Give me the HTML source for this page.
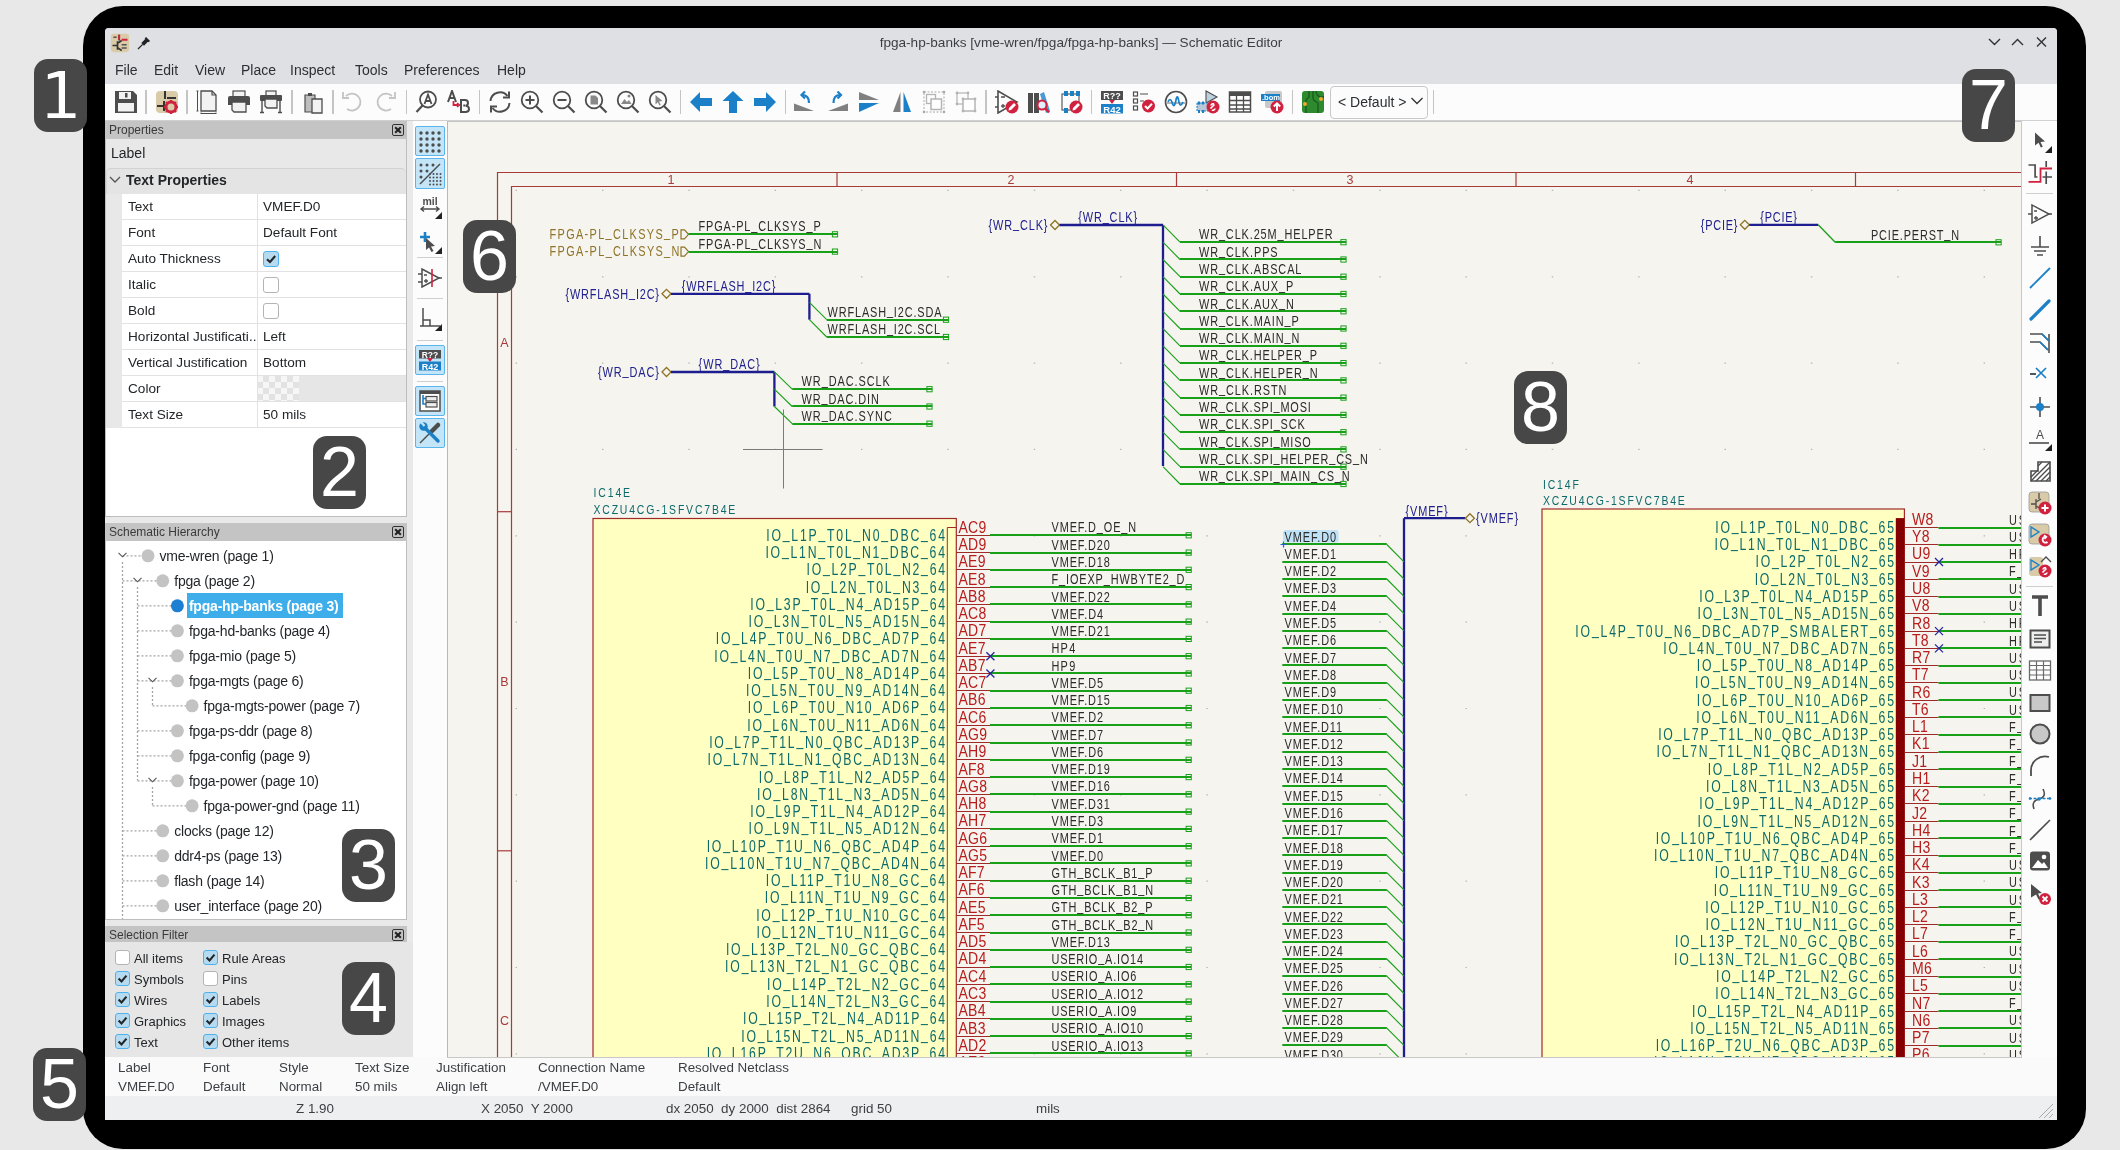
<!DOCTYPE html><html><head><meta charset="utf-8"><title>KiCad Schematic Editor</title><style>
*{box-sizing:border-box;margin:0;padding:0}
html,body{width:2120px;height:1150px;overflow:hidden;background:#e8e8e8;font-family:"Liberation Sans",sans-serif;color:#232629}
.a{position:absolute}
.t{position:absolute;white-space:nowrap;font-size:13.6px;line-height:16px;color:#232629}
.badge{position:absolute;width:53px;height:73px;background:#474747;border-radius:14px;color:#fff;font-size:70px;line-height:73px;text-align:center}
.hdr{position:absolute;left:105px;width:302px;height:18px;background:#c4c4c4}
.hdr span{position:absolute;left:4px;top:1px;font-size:12px;line-height:16px;color:#3a3a3a}
.xb{position:absolute;left:287px;top:3px;width:11.5px;height:11.5px;border:1.3px solid #333;border-radius:2px}
.xb:before,.xb:after{content:"";position:absolute;left:0.5px;top:3.6px;width:8px;height:2px;background:#222;transform:rotate(45deg)}
.xb:after{transform:rotate(-45deg)}
.cb{position:absolute;width:16px;height:16px;border:1px solid #b4b4b4;border-radius:3px;background:#fff}
.cb.on{background:#b6dbf1;border:1.6px solid #4fb1ea}
.tb{position:absolute;width:30px;height:30px;border:1px solid #5ab4ea;border-radius:2px;background:#c6e5f7}
</style></head><body>
<div id="root" style="position:absolute;left:0;top:0;width:2120px;height:1150px;will-change:transform">
<div class="a" style="left:83px;top:6px;width:2003px;height:1143px;background:#000;border-radius:40px"></div>
<div class="a" style="left:105px;top:28px;width:1952px;height:1092px;background:#e9e9e9;border-radius:4px 4px 0 0"></div>
<div class="a" style="left:105px;top:28px;width:1952px;height:56px;background:#dfe0e3;border-radius:4px 4px 0 0"></div>
<div class="t" style="left:0;width:2162px;text-align:center;top:35px;color:#3b3f43">fpga-hp-banks [vme-wren/fpga/fpga-hp-banks] — Schematic Editor</div>
<div class="t" style="left:115px;top:62px;font-size:14px;color:#2b2f33">File</div>
<div class="t" style="left:154px;top:62px;font-size:14px;color:#2b2f33">Edit</div>
<div class="t" style="left:195px;top:62px;font-size:14px;color:#2b2f33">View</div>
<div class="t" style="left:241px;top:62px;font-size:14px;color:#2b2f33">Place</div>
<div class="t" style="left:290px;top:62px;font-size:14px;color:#2b2f33">Inspect</div>
<div class="t" style="left:355px;top:62px;font-size:14px;color:#2b2f33">Tools</div>
<div class="t" style="left:404px;top:62px;font-size:14px;color:#2b2f33">Preferences</div>
<div class="t" style="left:497px;top:62px;font-size:14px;color:#2b2f33">Help</div>
<div class="a" style="left:105px;top:84px;width:1952px;height:37px;background:#fcfcfc;border-bottom:1px solid #d0d0d0"></div>
<svg class="a" style="left:110.0px;top:33.0px" width="20" height="20" viewBox="0 0 24 24"><rect x="1" y="1" width="22" height="22" rx="4" fill="#d9cba8"/><path d="M11 2 V9 M3 15 H9 M9 10 V20 M9 12.5 L14 9 M9 17.5 L14 21" stroke="#333" stroke-width="2" fill="none"/><path d="M11 2 V8 M14 8 H21" stroke="#d0223f" stroke-width="2.4"/><path d="M14 14 H20 M14 18 H20 M4 5 H8" stroke="#555" stroke-width="1.8"/></svg>
<svg class="a" style="left:136.0px;top:35.0px" width="16" height="16" viewBox="0 0 24 24"><path d="M3 21 L10 14" stroke="#222" stroke-width="1.8"/><path d="M8 12 L12 16 L19 9 L15 5 Z" fill="#222"/><path d="M14 4 L20 10" stroke="#222" stroke-width="3"/></svg>
<svg class="a" style="left:1985px;top:34px" width="70" height="18"><path d="M4 5 L9.5 10.5 L15 5 M27 11 L32.5 5.5 L38 11 M52 3.5 L61 12.5 M61 3.5 L52 12.5" stroke="#333" stroke-width="1.4" fill="none"/></svg>
<svg class="a" style="left:113.7px;top:89.7px" width="24" height="24" viewBox="0 0 24 24"><path d="M1 1 H19 L23 5 V23 H1 Z" fill="#4d4d4d"/><rect x="4" y="13" width="16" height="8.5" fill="#f2f2f2"/><rect x="5" y="2" width="12" height="7" fill="#f2f2f2"/><rect x="11" y="3" width="2.5" height="4.5" fill="#4d4d4d"/></svg>
<div class="a" style="left:145.2px;top:90px;width:1.5px;height:24px;background:#c4c4c4"></div>
<svg class="a" style="left:155.0px;top:89.7px" width="24" height="24" viewBox="0 0 24 24"><rect x="1" y="1" width="22" height="22" rx="4" fill="#d9cba8"/><path d="M10 1 V9 M2 16 H9 M9 11 V21 M12 8 H21" stroke="#333" stroke-width="2"/><circle cx="16" cy="17" r="5" fill="none" stroke="#d0223f" stroke-width="3"/><path d="M16 10 V12 M16 22 V24 M9 17 H11 M21 17 H23 M11 12 L12.5 13.5 M21 12 L19.5 13.5 M11 22 L12.5 20.5 M21 22 L19.5 20.5" stroke="#d0223f" stroke-width="2.2"/></svg>
<div class="a" style="left:186.2px;top:90px;width:1.5px;height:24px;background:#c4c4c4"></div>
<svg class="a" style="left:194.5px;top:89.7px" width="24" height="24" viewBox="0 0 24 24"><path d="M6 1 H17 L21 5 V21 H6 Z" fill="#f2f2f2" stroke="#4d4d4d" stroke-width="1.3"/><path d="M17 1 V5 H21" fill="none" stroke="#4d4d4d" stroke-width="1.2"/><path d="M2.5 1 V21 M1.5 1 H3.5 M1.5 21 H3.5 M6 23.5 H21 M6 22.5 V24 M21 22.5 V24" stroke="#4d4d4d" stroke-width="1"/></svg>
<svg class="a" style="left:227.0px;top:89.7px" width="24" height="24" viewBox="0 0 24 24"><rect x="6" y="1" width="12" height="6" fill="#f2f2f2" stroke="#4d4d4d" stroke-width="1.2"/><path d="M1 8 Q1 6 3 6 H21 Q23 6 23 8 V15 H1 Z" fill="#4d4d4d"/><path d="M5 12 H19 V22 H7 L5 20 Z" fill="#f2f2f2" stroke="#4d4d4d" stroke-width="1.3"/></svg>
<svg class="a" style="left:259.0px;top:89.7px" width="24" height="24" viewBox="0 0 24 24"><rect x="7" y="1" width="10" height="5" fill="#f2f2f2" stroke="#4d4d4d" stroke-width="1.2"/><rect x="1" y="5" width="22" height="6" rx="1" fill="#4d4d4d"/><path d="M6 9 H18 V18 H8 L6 16 Z" fill="#f2f2f2" stroke="#4d4d4d" stroke-width="1.3"/><path d="M3 11 V22 M21 11 V22 M1 22.5 H5 M19 22.5 H23" stroke="#4d4d4d" stroke-width="1.4"/></svg>
<div class="a" style="left:291.2px;top:90px;width:1.5px;height:24px;background:#c4c4c4"></div>
<svg class="a" style="left:302.0px;top:89.7px" width="24" height="24" viewBox="0 0 24 24"><path d="M3 5 H13 V22 H3 Z" fill="#bdbdbd" stroke="#4d4d4d" stroke-width="1.2"/><path d="M6 3 H10 V6 H6 Z" fill="#4d4d4d"/><path d="M10 9 H20 V23 H10 Z" fill="#f2f2f2" stroke="#4d4d4d" stroke-width="1.3"/></svg>
<div class="a" style="left:332.2px;top:90px;width:1.5px;height:24px;background:#c4c4c4"></div>
<svg class="a" style="left:341.0px;top:89.7px" width="24" height="24" viewBox="0 0 24 24"><path d="M5 6 A8.5 8.5 0 1 1 6 19" fill="none" stroke="#c4c4c4" stroke-width="1.8"/><path d="M2 2 V8 H8" fill="none" stroke="#c4c4c4" stroke-width="1.8"/></svg>
<svg class="a" style="left:373.0px;top:89.7px" width="24" height="24" viewBox="0 0 24 24"><path d="M19 6 A8.5 8.5 0 1 0 18 19" fill="none" stroke="#c4c4c4" stroke-width="1.8"/><path d="M22 2 V8 H16" fill="none" stroke="#c4c4c4" stroke-width="1.8"/></svg>
<div class="a" style="left:405.6px;top:90px;width:1.5px;height:24px;background:#c4c4c4"></div>
<svg class="a" style="left:415.0px;top:89.7px" width="24" height="24" viewBox="0 0 24 24"><circle cx="13" cy="9.5" r="8" fill="none" stroke="#4d4d4d" stroke-width="1.8"/><path d="M7.5 15.5 L1.5 22" stroke="#4d4d4d" stroke-width="2.2"/><path d="M9.5 14 L13 4.5 L16.5 14 M10.5 11 H15.5" stroke="#4d4d4d" stroke-width="1.8" fill="none"/></svg>
<svg class="a" style="left:447.0px;top:89.7px" width="24" height="24" viewBox="0 0 24 24"><path d="M1 12 L5 1 L9 12 M2.5 8 H7.5" stroke="#4d4d4d" stroke-width="2" fill="none"/><path d="M6.5 11 V15 H11" stroke="#d0223f" stroke-width="1.8" fill="none"/><path d="M10 13 L12.5 15 L10 17" stroke="#d0223f" stroke-width="1.6" fill="none"/><path d="M14 22 V10 H18 Q21 10 21 13 Q21 15.5 18.5 15.8 Q22 16 22 19 Q22 22 18.5 22 Z M16.3 15.5 H18" stroke="#4d4d4d" stroke-width="2" fill="none"/></svg>
<div class="a" style="left:478.6px;top:90px;width:1.5px;height:24px;background:#c4c4c4"></div>
<svg class="a" style="left:487.7px;top:89.7px" width="24" height="24" viewBox="0 0 24 24"><path d="M2.5 11 A9.5 9.5 0 0 1 19.5 6" fill="none" stroke="#4d4d4d" stroke-width="2"/><path d="M21.5 13 A9.5 9.5 0 0 1 4.5 18" fill="none" stroke="#4d4d4d" stroke-width="2"/><path d="M21 1.5 V7.5 H15" fill="none" stroke="#4d4d4d" stroke-width="2"/><path d="M3 22.5 V16.5 H9" fill="none" stroke="#4d4d4d" stroke-width="2"/></svg>
<svg class="a" style="left:519.6px;top:89.7px" width="24" height="24" viewBox="0 0 24 24"><circle cx="10" cy="10" r="8.3" fill="none" stroke="#4d4d4d" stroke-width="1.8"/><path d="M16 16 L22.5 22.5" stroke="#4d4d4d" stroke-width="2.2"/><path d="M10 5.5 V14.5 M5.5 10 H14.5" stroke="#4d4d4d" stroke-width="2"/></svg>
<svg class="a" style="left:552.0px;top:89.7px" width="24" height="24" viewBox="0 0 24 24"><circle cx="10" cy="10" r="8.3" fill="none" stroke="#4d4d4d" stroke-width="1.8"/><path d="M16 16 L22.5 22.5" stroke="#4d4d4d" stroke-width="2.2"/><path d="M5.5 10 H14.5" stroke="#4d4d4d" stroke-width="2"/></svg>
<svg class="a" style="left:584.0px;top:89.7px" width="24" height="24" viewBox="0 0 24 24"><circle cx="10" cy="10" r="8.3" fill="none" stroke="#4d4d4d" stroke-width="1.8"/><path d="M16 16 L22.5 22.5" stroke="#4d4d4d" stroke-width="2.2"/><path d="M6.5 5.5 H11.5 L14 8 V14.5 H6.5 Z" fill="#888"/></svg>
<svg class="a" style="left:616.0px;top:89.7px" width="24" height="24" viewBox="0 0 24 24"><circle cx="10" cy="10" r="8.3" fill="none" stroke="#4d4d4d" stroke-width="1.8"/><path d="M16 16 L22.5 22.5" stroke="#4d4d4d" stroke-width="2.2"/><path d="M5 14 L8.5 9 L11 12 L13 10 L15.5 14 Z" fill="#888"/><circle cx="13" cy="6" r="1.5" fill="#888"/></svg>
<svg class="a" style="left:648.0px;top:89.7px" width="24" height="24" viewBox="0 0 24 24"><circle cx="10" cy="10" r="8.3" fill="none" stroke="#4d4d4d" stroke-width="1.8"/><path d="M16 16 L22.5 22.5" stroke="#4d4d4d" stroke-width="2.2"/><path d="M7.5 5 L14.5 11 L11 11.5 L12.8 15 L11.5 15.6 L9.8 12.2 L7.5 14.5 Z" fill="#888"/></svg>
<div class="a" style="left:679.5px;top:90px;width:1.5px;height:24px;background:#c4c4c4"></div>
<svg class="a" style="left:689.0px;top:89.7px" width="24" height="24" viewBox="0 0 24 24"><path d="M1 12 L11 2 V8 H23 V16 H11 V22 Z" fill="#1b80c8"/></svg>
<svg class="a" style="left:720.5px;top:89.7px" width="24" height="24" viewBox="0 0 24 24"><path d="M12 1 L22.5 11 H16 V23 H8 V11 H1.5 Z" fill="#1b80c8"/></svg>
<svg class="a" style="left:752.6px;top:89.7px" width="24" height="24" viewBox="0 0 24 24"><path d="M23 12 L13 2 V8 H1 V16 H13 V22 Z" fill="#1b80c8"/></svg>
<div class="a" style="left:784.5px;top:90px;width:1.5px;height:24px;background:#c4c4c4"></div>
<svg class="a" style="left:793.4px;top:89.7px" width="24" height="24" viewBox="0 0 24 24"><path d="M1 21 L1 13.5 L21 21 Z" fill="#808080"/><path d="M16 13 Q16 5 9 5" fill="none" stroke="#1b80c8" stroke-width="2.2"/><path d="M12 1.5 L8.5 5 L12 8.5" fill="none" stroke="#1b80c8" stroke-width="2.2"/></svg>
<svg class="a" style="left:826.0px;top:89.7px" width="24" height="24" viewBox="0 0 24 24"><path d="M2 21 L22 13.5 L22 21 Z" fill="#808080"/><path d="M7.5 13 Q7.5 5 14 5" fill="none" stroke="#1b80c8" stroke-width="2.2"/><path d="M11.5 1.5 L15 5 L11.5 8.5" fill="none" stroke="#1b80c8" stroke-width="2.2"/></svg>
<svg class="a" style="left:857.0px;top:89.7px" width="24" height="24" viewBox="0 0 24 24"><path d="M2 2 L22 10 H2 Z" fill="#808080"/><path d="M2 13 H22 L2 22 Z" fill="#1b80c8"/></svg>
<svg class="a" style="left:889.7px;top:89.7px" width="24" height="24" viewBox="0 0 24 24"><path d="M10.5 2 V22 H3 Z" fill="#808080"/><path d="M13.5 2 L21 22 H13.5 Z" fill="#1b80c8"/></svg>
<svg class="a" style="left:921.5px;top:89.7px" width="24" height="24" viewBox="0 0 24 24"><rect x="2" y="2" width="20" height="20" fill="none" stroke="#aaa" stroke-width="1" stroke-dasharray="2 1.5"/><rect x="4.5" y="4.5" width="9" height="9" fill="none" stroke="#b4b4b4" stroke-width="1.3"/><rect x="9" y="9" width="10.5" height="10.5" fill="#fff" stroke="#b4b4b4" stroke-width="1.5"/><circle cx="2" cy="2" r="1.3" fill="#aaa"/><circle cx="22" cy="2" r="1.3" fill="#aaa"/><circle cx="2" cy="22" r="1.3" fill="#aaa"/><circle cx="22" cy="22" r="1.3" fill="#aaa"/></svg>
<svg class="a" style="left:953.5px;top:89.7px" width="24" height="24" viewBox="0 0 24 24"><rect x="3" y="3" width="11" height="11" fill="none" stroke="#b4b4b4" stroke-width="1.2"/><rect x="9" y="9" width="12" height="12" fill="#fff" stroke="#b4b4b4" stroke-width="1.5"/><g fill="#b4b4b4"><circle cx="3" cy="3" r="1.4"/><circle cx="14" cy="3" r="1.4"/><circle cx="3" cy="14" r="1.4"/><circle cx="9" cy="9" r="1.4"/><circle cx="21" cy="9" r="1.4"/><circle cx="9" cy="21" r="1.4"/><circle cx="21" cy="21" r="1.4"/></g></svg>
<div class="a" style="left:985.4px;top:90px;width:1.5px;height:24px;background:#c4c4c4"></div>
<svg class="a" style="left:994.6px;top:89.7px" width="24" height="24" viewBox="0 0 24 24"><path d="M3 1 V23 L22 12 Z" fill="none" stroke="#4d4d4d" stroke-width="1.6"/><path d="M0 7 H3 M0 17 H3 M6 7 H10 M6 16 H10 M8 14 V18" stroke="#4d4d4d" stroke-width="1.3"/><circle cx="17" cy="17" r="6.5" fill="#d0223f"/><path d="M13.5 20.5 L14 18 L19 13 L21 15 L16 20 Z" fill="#fff"/></svg>
<svg class="a" style="left:1027.0px;top:89.7px" width="24" height="24" viewBox="0 0 24 24"><rect x="1" y="3" width="5" height="20" fill="#4d4d4d"/><rect x="7" y="3" width="5" height="20" fill="#4d4d4d"/><path d="M13 4 L17 2 L23 21 L19 23 Z" fill="#1b80c8" opacity="0.8"/><circle cx="15" cy="15" r="4.5" fill="#dff0fb" stroke="#d0223f" stroke-width="2"/><path d="M18 18 L22 22.5" stroke="#d0223f" stroke-width="2.5"/></svg>
<svg class="a" style="left:1058.9px;top:89.7px" width="24" height="24" viewBox="0 0 24 24"><rect x="3" y="4" width="17" height="16" fill="none" stroke="#4d4d4d" stroke-width="1.1"/><g fill="#1b80c8"><rect x="5" y="1" width="4" height="5"/><rect x="11" y="1" width="4" height="5"/><rect x="17" y="1" width="4" height="5"/><rect x="5" y="18" width="4" height="5"/></g><circle cx="17" cy="17" r="6.5" fill="#d0223f"/><path d="M13.5 20.5 L14 18 L19 13 L21 15 L16 20 Z" fill="#fff"/></svg>
<div class="a" style="left:1090.5px;top:90px;width:1.5px;height:24px;background:#c4c4c4"></div>
<svg class="a" style="left:1099.7px;top:89.7px" width="24" height="24" viewBox="0 0 24 24"><rect x="1" y="1" width="22" height="9" fill="#4d4d4d"/><text x="12" y="9" font-size="9" font-weight="bold" fill="#fff" text-anchor="middle" font-family="Liberation Sans">R??</text><path d="M9 10 H15 L12 14 Z" fill="#d0223f"/><rect x="1" y="14" width="22" height="9.5" fill="#1b80c8"/><text x="12" y="22.5" font-size="9.5" font-weight="bold" fill="#fff" text-anchor="middle" font-family="Liberation Sans">R42</text></svg>
<svg class="a" style="left:1132.4px;top:89.7px" width="24" height="24" viewBox="0 0 24 24"><g fill="none" stroke="#4d4d4d" stroke-width="1.2"><rect x="1.5" y="2" width="4" height="4"/><rect x="1.5" y="9" width="4" height="4"/><rect x="1.5" y="16" width="4" height="4"/></g><path d="M8 4 H16 M8 11 H12" stroke="#4d4d4d" stroke-width="1.2"/><circle cx="16.5" cy="16" r="6.5" fill="#d0223f"/><path d="M13 16 L15.5 18.5 L20 13.8" stroke="#fff" stroke-width="2" fill="none"/></svg>
<svg class="a" style="left:1163.7px;top:89.7px" width="24" height="24" viewBox="0 0 24 24"><circle cx="12" cy="12" r="10.5" fill="none" stroke="#4d4d4d" stroke-width="1.6"/><path d="M3 13 H21" stroke="#4d4d4d" stroke-width="0.8"/><path d="M4 12 Q6 7 8 12 Q10 20 12 10 Q13.5 3 15 12 Q16.5 18 19 12" fill="none" stroke="#1b80c8" stroke-width="1.7"/></svg>
<svg class="a" style="left:1195.6px;top:89.7px" width="24" height="24" viewBox="0 0 24 24"><path d="M10 1 V13 L21 7 Z" fill="#bcd0e0" stroke="#4d4d4d" stroke-width="1.1"/><rect x="1" y="13" width="11" height="8" fill="#b8c8d8" stroke="#1b80c8" stroke-width="1" stroke-dasharray="2 1"/><g fill="#1b80c8"><rect x="2" y="11.5" width="2" height="3"/><rect x="6" y="11.5" width="2" height="3"/><rect x="2" y="20" width="2" height="3"/><rect x="6" y="20" width="2" height="3"/></g><circle cx="17" cy="17" r="6.5" fill="#d0223f"/><path d="M14.5 18.5 L18.5 14.5 M15 15.5 A2 2 0 0 1 18 14 M19 18.5 A2 2 0 0 1 16 20" stroke="#fff" stroke-width="1.6" fill="none"/></svg>
<svg class="a" style="left:1227.7px;top:89.7px" width="24" height="24" viewBox="0 0 24 24"><rect x="1.5" y="2" width="21" height="20" fill="#fff" stroke="#4d4d4d" stroke-width="1.5"/><rect x="1.5" y="2" width="21" height="4" fill="#4d4d4d"/><path d="M1.5 10.5 H22.5 M1.5 15 H22.5 M1.5 19 H22.5 M8.5 6 V22 M15.5 6 V22" stroke="#4d4d4d" stroke-width="1.3"/></svg>
<svg class="a" style="left:1259.6px;top:89.7px" width="24" height="24" viewBox="0 0 24 24"><rect x="5" y="1" width="17" height="17" rx="2" fill="#c8c8c8"/><rect x="1" y="4" width="19" height="7" fill="#1b80c8"/><text x="11" y="10" font-size="7.5" fill="#fff" text-anchor="middle" font-family="Liberation Sans" font-weight="bold">.bom</text><circle cx="17" cy="17" r="6.5" fill="#d0223f"/><path d="M17 21 V13.5 M13.8 16.5 L17 13.3 L20.2 16.5" stroke="#fff" stroke-width="2" fill="none"/></svg>
<div class="a" style="left:1291.7px;top:90px;width:1.5px;height:24px;background:#c4c4c4"></div>
<svg class="a" style="left:1300.8px;top:89.7px" width="24" height="24" viewBox="0 0 24 24"><rect x="1" y="1" width="22" height="22" rx="3" fill="#2e8a2e"/><path d="M8 1 V7 L5 10 V23 M12 1 V8 Q12 10 14 11 L17 13 V23 M15 1 Q15 5 19 7 H23" fill="none" stroke="#1a5e1a" stroke-width="1.4"/><circle cx="4" cy="14" r="2" fill="#f0a830"/><circle cx="20" cy="9" r="2" fill="#f0a830"/></svg>
<div class="a" style="left:1330px;top:86px;width:97.5px;height:32.5px;border:1px solid #c8c8c8;border-radius:4px;background:#fcfcfc"></div>
<div class="t" style="left:1338px;top:94px;font-size:14px;color:#2b2f33">&lt; Default &gt;</div>
<svg class="a" style="left:1410px;top:96px" width="14" height="10"><path d="M1.5 2 L7 7.5 L12.5 2" stroke="#333" stroke-width="1.3" fill="none"/></svg>
<div class="a" style="left:1432.5px;top:90px;width:1.5px;height:24px;background:#c4c4c4"></div>
<div class="hdr" style="top:121px"><span>Properties</span><div class="xb"></div></div>
<div class="a" style="left:105px;top:139px;width:302px;height:378px;background:#e8e8e8;border:1px solid #bdbdbd;border-top:none"></div>
<div class="t" style="left:111px;top:145px;font-size:14px">Label</div>
<div class="a" style="left:106px;top:168px;width:300px;height:26px;background:#e4e4e4;border-radius:5px 5px 0 0;border-top:1px solid #d2d2d2;border-left:1px solid #d8d8d8"></div>
<svg class="a" style="left:109px;top:175px" width="12" height="10"><path d="M1 2 L6 7 L11 2" stroke="#555" stroke-width="1.3" fill="none"/></svg>
<div class="t" style="left:126px;top:172px;font-size:14px;font-weight:bold">Text Properties</div>
<div class="a" style="left:106px;top:194px;width:300px;height:322px;background:#fff"></div>
<div class="a" style="left:106px;top:194px;width:16px;height:234px;background:#e8e8e8"></div>
<div class="a" style="left:122px;top:219px;width:284px;height:1px;background:#e2e2e2"></div>
<div class="t" style="left:128px;top:199px">Text</div>
<div class="t" style="left:263px;top:199px">VMEF.D0</div>
<div class="a" style="left:122px;top:245px;width:284px;height:1px;background:#e2e2e2"></div>
<div class="t" style="left:128px;top:225px">Font</div>
<div class="t" style="left:263px;top:225px">Default Font</div>
<div class="a" style="left:122px;top:271px;width:284px;height:1px;background:#e2e2e2"></div>
<div class="t" style="left:128px;top:251px">Auto Thickness</div>
<div class="cb on" style="left:263px;top:251px"></div>
<svg class="a" style="left:263px;top:251px" width="16" height="16"><path d="M4 8.2 L7 11 L12.2 5" stroke="#232629" stroke-width="2.1" fill="none"/></svg>
<div class="a" style="left:122px;top:297px;width:284px;height:1px;background:#e2e2e2"></div>
<div class="t" style="left:128px;top:277px">Italic</div>
<div class="cb" style="left:263px;top:277px"></div>
<div class="a" style="left:122px;top:323px;width:284px;height:1px;background:#e2e2e2"></div>
<div class="t" style="left:128px;top:303px">Bold</div>
<div class="cb" style="left:263px;top:303px"></div>
<div class="a" style="left:122px;top:349px;width:284px;height:1px;background:#e2e2e2"></div>
<div class="t" style="left:128px;top:329px">Horizontal Justificati..</div>
<div class="t" style="left:263px;top:329px">Left</div>
<div class="a" style="left:122px;top:375px;width:284px;height:1px;background:#e2e2e2"></div>
<div class="t" style="left:128px;top:355px">Vertical Justification</div>
<div class="t" style="left:263px;top:355px">Bottom</div>
<div class="a" style="left:122px;top:401px;width:284px;height:1px;background:#e2e2e2"></div>
<div class="t" style="left:128px;top:381px">Color</div>
<div class="a" style="left:257px;top:376px;width:149px;height:25px;background:#e6e6e6"></div>
<svg class="a" style="left:257px;top:376px" width="42" height="25"><rect width="42" height="25" fill="#e2e2e2"/><rect x="0" y="0" width="6" height="6" fill="#f6f6f6"/><rect x="0" y="12" width="6" height="6" fill="#f6f6f6"/><rect x="0" y="24" width="6" height="6" fill="#f6f6f6"/><rect x="6" y="6" width="6" height="6" fill="#f6f6f6"/><rect x="6" y="18" width="6" height="6" fill="#f6f6f6"/><rect x="12" y="0" width="6" height="6" fill="#f6f6f6"/><rect x="12" y="12" width="6" height="6" fill="#f6f6f6"/><rect x="12" y="24" width="6" height="6" fill="#f6f6f6"/><rect x="18" y="6" width="6" height="6" fill="#f6f6f6"/><rect x="18" y="18" width="6" height="6" fill="#f6f6f6"/><rect x="24" y="0" width="6" height="6" fill="#f6f6f6"/><rect x="24" y="12" width="6" height="6" fill="#f6f6f6"/><rect x="24" y="24" width="6" height="6" fill="#f6f6f6"/><rect x="30" y="6" width="6" height="6" fill="#f6f6f6"/><rect x="30" y="18" width="6" height="6" fill="#f6f6f6"/><rect x="36" y="0" width="6" height="6" fill="#f6f6f6"/><rect x="36" y="12" width="6" height="6" fill="#f6f6f6"/><rect x="36" y="24" width="6" height="6" fill="#f6f6f6"/></svg>
<div class="a" style="left:122px;top:427px;width:284px;height:1px;background:#e2e2e2"></div>
<div class="t" style="left:128px;top:407px">Text Size</div>
<div class="t" style="left:263px;top:407px">50 mils</div>
<div class="a" style="left:257px;top:194px;width:1px;height:234px;background:#e2e2e2"></div>
<div class="hdr" style="top:523px"><span>Schematic Hierarchy</span><div class="xb"></div></div>
<div class="a" style="left:105px;top:541px;width:302px;height:379px;background:#fff;border:1px solid #bdbdbd;border-top:none"></div>
<svg class="a" style="left:105px;top:541px" width="302" height="378"><line x1="17.5" y1="21" x2="17.5" y2="378" stroke="#a4a4a4" stroke-width="1.3" stroke-dasharray="2 2"/><line x1="32.5" y1="46" x2="32.5" y2="239.5" stroke="#a4a4a4" stroke-width="1.3" stroke-dasharray="2 2"/><line x1="47.5" y1="146" x2="47.5" y2="164.5" stroke="#a4a4a4" stroke-width="1.3" stroke-dasharray="2 2"/><line x1="47.5" y1="246" x2="47.5" y2="264.5" stroke="#a4a4a4" stroke-width="1.3" stroke-dasharray="2 2"/><line x1="17.5" y1="14.799999999999955" x2="37.0" y2="14.799999999999955" stroke="#a4a4a4" stroke-width="1.3" stroke-dasharray="2 2"/><path d="M13.5 11.799999999999955 L17.5 15.799999999999955 L21.5 11.799999999999955" stroke="#555" stroke-width="1.1" fill="none"/><circle cx="43.0" cy="14.799999999999955" r="6.5" fill="#c3c3c3"/><line x1="17.5" y1="39.799999999999955" x2="51.69999999999999" y2="39.799999999999955" stroke="#a4a4a4" stroke-width="1.3" stroke-dasharray="2 2"/><path d="M28.5 36.799999999999955 L32.5 40.799999999999955 L36.5 36.799999999999955" stroke="#555" stroke-width="1.1" fill="none"/><circle cx="57.69999999999999" cy="39.799999999999955" r="6.5" fill="#c3c3c3"/><line x1="32.5" y1="64.79999999999995" x2="66.4" y2="64.79999999999995" stroke="#a4a4a4" stroke-width="1.3" stroke-dasharray="2 2"/><circle cx="72.4" cy="64.79999999999995" r="6.5" fill="#1d7fd1"/><line x1="32.5" y1="89.79999999999995" x2="66.4" y2="89.79999999999995" stroke="#a4a4a4" stroke-width="1.3" stroke-dasharray="2 2"/><circle cx="72.4" cy="89.79999999999995" r="6.5" fill="#c3c3c3"/><line x1="32.5" y1="114.79999999999995" x2="66.4" y2="114.79999999999995" stroke="#a4a4a4" stroke-width="1.3" stroke-dasharray="2 2"/><circle cx="72.4" cy="114.79999999999995" r="6.5" fill="#c3c3c3"/><line x1="32.5" y1="139.79999999999995" x2="66.4" y2="139.79999999999995" stroke="#a4a4a4" stroke-width="1.3" stroke-dasharray="2 2"/><path d="M43.5 136.79999999999995 L47.5 140.79999999999995 L51.5 136.79999999999995" stroke="#555" stroke-width="1.1" fill="none"/><circle cx="72.4" cy="139.79999999999995" r="6.5" fill="#c3c3c3"/><line x1="47.5" y1="164.79999999999995" x2="81.1" y2="164.79999999999995" stroke="#a4a4a4" stroke-width="1.3" stroke-dasharray="2 2"/><circle cx="87.1" cy="164.79999999999995" r="6.5" fill="#c3c3c3"/><line x1="32.5" y1="189.79999999999995" x2="66.4" y2="189.79999999999995" stroke="#a4a4a4" stroke-width="1.3" stroke-dasharray="2 2"/><circle cx="72.4" cy="189.79999999999995" r="6.5" fill="#c3c3c3"/><line x1="32.5" y1="214.79999999999995" x2="66.4" y2="214.79999999999995" stroke="#a4a4a4" stroke-width="1.3" stroke-dasharray="2 2"/><circle cx="72.4" cy="214.79999999999995" r="6.5" fill="#c3c3c3"/><line x1="32.5" y1="239.79999999999995" x2="66.4" y2="239.79999999999995" stroke="#a4a4a4" stroke-width="1.3" stroke-dasharray="2 2"/><path d="M43.5 236.79999999999995 L47.5 240.79999999999995 L51.5 236.79999999999995" stroke="#555" stroke-width="1.1" fill="none"/><circle cx="72.4" cy="239.79999999999995" r="6.5" fill="#c3c3c3"/><line x1="47.5" y1="264.79999999999995" x2="81.1" y2="264.79999999999995" stroke="#a4a4a4" stroke-width="1.3" stroke-dasharray="2 2"/><circle cx="87.1" cy="264.79999999999995" r="6.5" fill="#c3c3c3"/><line x1="17.5" y1="289.79999999999995" x2="51.69999999999999" y2="289.79999999999995" stroke="#a4a4a4" stroke-width="1.3" stroke-dasharray="2 2"/><circle cx="57.69999999999999" cy="289.79999999999995" r="6.5" fill="#c3c3c3"/><line x1="17.5" y1="314.79999999999995" x2="51.69999999999999" y2="314.79999999999995" stroke="#a4a4a4" stroke-width="1.3" stroke-dasharray="2 2"/><circle cx="57.69999999999999" cy="314.79999999999995" r="6.5" fill="#c3c3c3"/><line x1="17.5" y1="339.79999999999995" x2="51.69999999999999" y2="339.79999999999995" stroke="#a4a4a4" stroke-width="1.3" stroke-dasharray="2 2"/><circle cx="57.69999999999999" cy="339.79999999999995" r="6.5" fill="#c3c3c3"/><line x1="17.5" y1="364.79999999999995" x2="51.69999999999999" y2="364.79999999999995" stroke="#a4a4a4" stroke-width="1.3" stroke-dasharray="2 2"/><circle cx="57.69999999999999" cy="364.79999999999995" r="6.5" fill="#c3c3c3"/></svg>
<div class="t" style="left:159.5px;top:547.8px;font-size:14px;letter-spacing:-0.2px">vme-wren (page 1)</div>
<div class="t" style="left:174.2px;top:572.8px;font-size:14px;letter-spacing:-0.2px">fpga (page 2)</div>
<div class="a" style="left:186.8px;top:593px;width:156px;height:25px;background:#3daee9"></div>
<div class="t" style="left:188.9px;top:597.8px;font-size:14px;font-weight:bold;color:#fff;letter-spacing:-0.2px">fpga-hp-banks (page 3)</div>
<div class="t" style="left:188.9px;top:622.8px;font-size:14px;letter-spacing:-0.2px">fpga-hd-banks (page 4)</div>
<div class="t" style="left:188.9px;top:647.8px;font-size:14px;letter-spacing:-0.2px">fpga-mio (page 5)</div>
<div class="t" style="left:188.9px;top:672.8px;font-size:14px;letter-spacing:-0.2px">fpga-mgts (page 6)</div>
<div class="t" style="left:203.6px;top:697.8px;font-size:14px;letter-spacing:-0.2px">fpga-mgts-power (page 7)</div>
<div class="t" style="left:188.9px;top:722.8px;font-size:14px;letter-spacing:-0.2px">fpga-ps-ddr (page 8)</div>
<div class="t" style="left:188.9px;top:747.8px;font-size:14px;letter-spacing:-0.2px">fpga-config (page 9)</div>
<div class="t" style="left:188.9px;top:772.8px;font-size:14px;letter-spacing:-0.2px">fpga-power (page 10)</div>
<div class="t" style="left:203.6px;top:797.8px;font-size:14px;letter-spacing:-0.2px">fpga-power-gnd (page 11)</div>
<div class="t" style="left:174.2px;top:822.8px;font-size:14px;letter-spacing:-0.2px">clocks (page 12)</div>
<div class="t" style="left:174.2px;top:847.8px;font-size:14px;letter-spacing:-0.2px">ddr4-ps (page 13)</div>
<div class="t" style="left:174.2px;top:872.8px;font-size:14px;letter-spacing:-0.2px">flash (page 14)</div>
<div class="t" style="left:174.2px;top:897.8px;font-size:14px;letter-spacing:-0.2px">user_interface (page 20)</div>
<div class="hdr" style="top:926px"><span>Selection Filter</span><div class="xb"></div></div>
<div class="a" style="left:105px;top:942px;width:308px;height:115px;background:#e6e6e6"></div>
<div class="cb" style="left:115px;top:950px;width:15px;height:15px"></div>
<div class="t" style="left:134px;top:950.5px;font-size:13px">All items</div>
<div class="cb on" style="left:203px;top:950px;width:15px;height:15px"></div>
<svg class="a" style="left:203px;top:950px" width="15" height="15"><path d="M3.6 7.6 L6.5 10.4 L11.5 4.6" stroke="#232629" stroke-width="2.1" fill="none"/></svg>
<div class="t" style="left:222px;top:950.5px;font-size:13px">Rule Areas</div>
<div class="cb on" style="left:115px;top:971px;width:15px;height:15px"></div>
<svg class="a" style="left:115px;top:971px" width="15" height="15"><path d="M3.6 7.6 L6.5 10.4 L11.5 4.6" stroke="#232629" stroke-width="2.1" fill="none"/></svg>
<div class="t" style="left:134px;top:971.5px;font-size:13px">Symbols</div>
<div class="cb" style="left:203px;top:971px;width:15px;height:15px"></div>
<div class="t" style="left:222px;top:971.5px;font-size:13px">Pins</div>
<div class="cb on" style="left:115px;top:992px;width:15px;height:15px"></div>
<svg class="a" style="left:115px;top:992px" width="15" height="15"><path d="M3.6 7.6 L6.5 10.4 L11.5 4.6" stroke="#232629" stroke-width="2.1" fill="none"/></svg>
<div class="t" style="left:134px;top:992.5px;font-size:13px">Wires</div>
<div class="cb on" style="left:203px;top:992px;width:15px;height:15px"></div>
<svg class="a" style="left:203px;top:992px" width="15" height="15"><path d="M3.6 7.6 L6.5 10.4 L11.5 4.6" stroke="#232629" stroke-width="2.1" fill="none"/></svg>
<div class="t" style="left:222px;top:992.5px;font-size:13px">Labels</div>
<div class="cb on" style="left:115px;top:1013px;width:15px;height:15px"></div>
<svg class="a" style="left:115px;top:1013px" width="15" height="15"><path d="M3.6 7.6 L6.5 10.4 L11.5 4.6" stroke="#232629" stroke-width="2.1" fill="none"/></svg>
<div class="t" style="left:134px;top:1013.5px;font-size:13px">Graphics</div>
<div class="cb on" style="left:203px;top:1013px;width:15px;height:15px"></div>
<svg class="a" style="left:203px;top:1013px" width="15" height="15"><path d="M3.6 7.6 L6.5 10.4 L11.5 4.6" stroke="#232629" stroke-width="2.1" fill="none"/></svg>
<div class="t" style="left:222px;top:1013.5px;font-size:13px">Images</div>
<div class="cb on" style="left:115px;top:1034px;width:15px;height:15px"></div>
<svg class="a" style="left:115px;top:1034px" width="15" height="15"><path d="M3.6 7.6 L6.5 10.4 L11.5 4.6" stroke="#232629" stroke-width="2.1" fill="none"/></svg>
<div class="t" style="left:134px;top:1034.5px;font-size:13px">Text</div>
<div class="cb on" style="left:203px;top:1034px;width:15px;height:15px"></div>
<svg class="a" style="left:203px;top:1034px" width="15" height="15"><path d="M3.6 7.6 L6.5 10.4 L11.5 4.6" stroke="#232629" stroke-width="2.1" fill="none"/></svg>
<div class="t" style="left:222px;top:1034.5px;font-size:13px">Other items</div>
<div class="a" style="left:413px;top:121px;width:34px;height:936px;background:#fcfcfc"></div>
<div class="a" style="left:2022px;top:121px;width:35px;height:936px;background:#fcfcfc"></div>
<svg class="a" style="left:447px;top:121px" width="1575" height="936" viewBox="447 121 1575 936" font-family="Liberation Sans, sans-serif"><rect x="447" y="121" width="1575" height="936" fill="#f5f4ef"/><line x1="447.5" y1="121" x2="447.5" y2="1057" stroke="#b8b8b8" stroke-width="1"/><line x1="447" y1="121.5" x2="2022" y2="121.5" stroke="#c4c4c4" stroke-width="1"/><path d="M515.6 190.4h1.4M515.6 276.8h1.4M515.6 363.1h1.4M515.6 449.4h1.4M515.6 535.8h1.4M515.6 622.1h1.4M515.6 708.5h1.4M515.6 794.8h1.4M515.6 881.2h1.4M515.6 967.5h1.4M515.6 1053.9h1.4M602.0 190.4h1.4M602.0 276.8h1.4M602.0 363.1h1.4M602.0 449.4h1.4M602.0 535.8h1.4M602.0 622.1h1.4M602.0 708.5h1.4M602.0 794.8h1.4M602.0 881.2h1.4M602.0 967.5h1.4M602.0 1053.9h1.4M688.4 190.4h1.4M688.4 276.8h1.4M688.4 363.1h1.4M688.4 449.4h1.4M688.4 535.8h1.4M688.4 622.1h1.4M688.4 708.5h1.4M688.4 794.8h1.4M688.4 881.2h1.4M688.4 967.5h1.4M688.4 1053.9h1.4M774.7 190.4h1.4M774.7 276.8h1.4M774.7 363.1h1.4M774.7 449.4h1.4M774.7 535.8h1.4M774.7 622.1h1.4M774.7 708.5h1.4M774.7 794.8h1.4M774.7 881.2h1.4M774.7 967.5h1.4M774.7 1053.9h1.4M861.0 190.4h1.4M861.0 276.8h1.4M861.0 363.1h1.4M861.0 449.4h1.4M861.0 535.8h1.4M861.0 622.1h1.4M861.0 708.5h1.4M861.0 794.8h1.4M861.0 881.2h1.4M861.0 967.5h1.4M861.0 1053.9h1.4M947.4 190.4h1.4M947.4 276.8h1.4M947.4 363.1h1.4M947.4 449.4h1.4M947.4 535.8h1.4M947.4 622.1h1.4M947.4 708.5h1.4M947.4 794.8h1.4M947.4 881.2h1.4M947.4 967.5h1.4M947.4 1053.9h1.4M1033.8 190.4h1.4M1033.8 276.8h1.4M1033.8 363.1h1.4M1033.8 449.4h1.4M1033.8 535.8h1.4M1033.8 622.1h1.4M1033.8 708.5h1.4M1033.8 794.8h1.4M1033.8 881.2h1.4M1033.8 967.5h1.4M1033.8 1053.9h1.4M1120.1 190.4h1.4M1120.1 276.8h1.4M1120.1 363.1h1.4M1120.1 449.4h1.4M1120.1 535.8h1.4M1120.1 622.1h1.4M1120.1 708.5h1.4M1120.1 794.8h1.4M1120.1 881.2h1.4M1120.1 967.5h1.4M1120.1 1053.9h1.4M1206.4 190.4h1.4M1206.4 276.8h1.4M1206.4 363.1h1.4M1206.4 449.4h1.4M1206.4 535.8h1.4M1206.4 622.1h1.4M1206.4 708.5h1.4M1206.4 794.8h1.4M1206.4 881.2h1.4M1206.4 967.5h1.4M1206.4 1053.9h1.4M1292.8 190.4h1.4M1292.8 276.8h1.4M1292.8 363.1h1.4M1292.8 449.4h1.4M1292.8 535.8h1.4M1292.8 622.1h1.4M1292.8 708.5h1.4M1292.8 794.8h1.4M1292.8 881.2h1.4M1292.8 967.5h1.4M1292.8 1053.9h1.4M1379.2 190.4h1.4M1379.2 276.8h1.4M1379.2 363.1h1.4M1379.2 449.4h1.4M1379.2 535.8h1.4M1379.2 622.1h1.4M1379.2 708.5h1.4M1379.2 794.8h1.4M1379.2 881.2h1.4M1379.2 967.5h1.4M1379.2 1053.9h1.4M1465.5 190.4h1.4M1465.5 276.8h1.4M1465.5 363.1h1.4M1465.5 449.4h1.4M1465.5 535.8h1.4M1465.5 622.1h1.4M1465.5 708.5h1.4M1465.5 794.8h1.4M1465.5 881.2h1.4M1465.5 967.5h1.4M1465.5 1053.9h1.4M1551.8 190.4h1.4M1551.8 276.8h1.4M1551.8 363.1h1.4M1551.8 449.4h1.4M1551.8 535.8h1.4M1551.8 622.1h1.4M1551.8 708.5h1.4M1551.8 794.8h1.4M1551.8 881.2h1.4M1551.8 967.5h1.4M1551.8 1053.9h1.4M1638.2 190.4h1.4M1638.2 276.8h1.4M1638.2 363.1h1.4M1638.2 449.4h1.4M1638.2 535.8h1.4M1638.2 622.1h1.4M1638.2 708.5h1.4M1638.2 794.8h1.4M1638.2 881.2h1.4M1638.2 967.5h1.4M1638.2 1053.9h1.4M1724.5 190.4h1.4M1724.5 276.8h1.4M1724.5 363.1h1.4M1724.5 449.4h1.4M1724.5 535.8h1.4M1724.5 622.1h1.4M1724.5 708.5h1.4M1724.5 794.8h1.4M1724.5 881.2h1.4M1724.5 967.5h1.4M1724.5 1053.9h1.4M1810.9 190.4h1.4M1810.9 276.8h1.4M1810.9 363.1h1.4M1810.9 449.4h1.4M1810.9 535.8h1.4M1810.9 622.1h1.4M1810.9 708.5h1.4M1810.9 794.8h1.4M1810.9 881.2h1.4M1810.9 967.5h1.4M1810.9 1053.9h1.4M1897.2 190.4h1.4M1897.2 276.8h1.4M1897.2 363.1h1.4M1897.2 449.4h1.4M1897.2 535.8h1.4M1897.2 622.1h1.4M1897.2 708.5h1.4M1897.2 794.8h1.4M1897.2 881.2h1.4M1897.2 967.5h1.4M1897.2 1053.9h1.4M1983.6 190.4h1.4M1983.6 276.8h1.4M1983.6 363.1h1.4M1983.6 449.4h1.4M1983.6 535.8h1.4M1983.6 622.1h1.4M1983.6 708.5h1.4M1983.6 794.8h1.4M1983.6 881.2h1.4M1983.6 967.5h1.4M1983.6 1053.9h1.4" stroke="#b4b4b4" stroke-width="1.2"/><path d="M2030 172.5 H497.5 V1060 M2030 186.5 H511.5 V1060" stroke="#a83a3a" stroke-width="1.2" fill="none"/><line x1="837" y1="172.5" x2="837" y2="186.5" stroke="#a83a3a" stroke-width="1.2"/><line x1="1176.5" y1="172.5" x2="1176.5" y2="186.5" stroke="#a83a3a" stroke-width="1.2"/><line x1="1516" y1="172.5" x2="1516" y2="186.5" stroke="#a83a3a" stroke-width="1.2"/><line x1="1855.5" y1="172.5" x2="1855.5" y2="186.5" stroke="#a83a3a" stroke-width="1.2"/><line x1="497.5" y1="511.7" x2="511.5" y2="511.7" stroke="#a83a3a" stroke-width="1.2"/><line x1="497.5" y1="850.8" x2="511.5" y2="850.8" stroke="#a83a3a" stroke-width="1.2"/><text x="671" y="183.8" font-size="12.5" fill="#a83a3a" text-anchor="middle">1</text><text x="1011" y="183.8" font-size="12.5" fill="#a83a3a" text-anchor="middle">2</text><text x="1350" y="183.8" font-size="12.5" fill="#a83a3a" text-anchor="middle">3</text><text x="1690" y="183.8" font-size="12.5" fill="#a83a3a" text-anchor="middle">4</text><text x="504.5" y="346.5" font-size="12.5" fill="#a83a3a" text-anchor="middle">A</text><text x="504.5" y="686.0" font-size="12.5" fill="#a83a3a" text-anchor="middle">B</text><text x="504.5" y="1025.0" font-size="12.5" fill="#a83a3a" text-anchor="middle">C</text><text transform="translate(549.6 239.1) scale(0.78 1)" font-size="14.0" fill="#8f7326" text-anchor="start" textLength="165.5" lengthAdjust="spacing">FPGA-PL<tspan dy="-1.68">_</tspan><tspan dy="1.68">CLKSYS</tspan><tspan dy="-1.68">_</tspan><tspan dy="1.68">P</tspan></text><path d="M681 229.8 H684.5 L688.5 234.3 L684.5 238.8 H681 Z" fill="none" stroke="#8f7326" stroke-width="1.2"/><line x1="688.5" y1="234.0" x2="837.5" y2="234.0" stroke="#18a018" stroke-width="2"/><rect x="832.4" y="231.7" width="5.2" height="5.2" fill="none" stroke="#18a018" stroke-width="1"/><text transform="translate(698.6 231.3) scale(0.78 1)" font-size="14.0" fill="#2b2b2b" text-anchor="start" textLength="156.5" lengthAdjust="spacing">FPGA-PL<tspan dy="-1.68">_</tspan><tspan dy="1.68">CLKSYS</tspan><tspan dy="-1.68">_</tspan><tspan dy="1.68">P</tspan></text><text transform="translate(549.6 256.4) scale(0.78 1)" font-size="14.0" fill="#8f7326" text-anchor="start" textLength="166.4" lengthAdjust="spacing">FPGA-PL<tspan dy="-1.68">_</tspan><tspan dy="1.68">CLKSYS</tspan><tspan dy="-1.68">_</tspan><tspan dy="1.68">N</tspan></text><path d="M681 247.1 H684.5 L688.5 251.6 L684.5 256.1 H681 Z" fill="none" stroke="#8f7326" stroke-width="1.2"/><line x1="688.5" y1="252.0" x2="837.5" y2="252.0" stroke="#18a018" stroke-width="2"/><rect x="832.4" y="249.0" width="5.2" height="5.2" fill="none" stroke="#18a018" stroke-width="1"/><text transform="translate(698.6 248.6) scale(0.78 1)" font-size="14.0" fill="#2b2b2b" text-anchor="start" textLength="157.3" lengthAdjust="spacing">FPGA-PL<tspan dy="-1.68">_</tspan><tspan dy="1.68">CLKSYS</tspan><tspan dy="-1.68">_</tspan><tspan dy="1.68">N</tspan></text><text transform="translate(659.0 298.7) scale(0.78 1)" font-size="14.0" fill="#20208e" text-anchor="end" textLength="120.0" lengthAdjust="spacing">{WRFLASH<tspan dy="-1.68">_</tspan><tspan dy="1.68">I2C}</tspan></text><path d="M662.0 293.8 L666.5 289.3 L671.0 293.8 L666.5 298.3 Z" fill="none" stroke="#8f7326" stroke-width="1.3"/><line x1="671.0" y1="293.8" x2="809.4" y2="293.8" stroke="#1d1d8f" stroke-width="2.3"/><line x1="809.4" y1="293.8" x2="809.4" y2="319.7" stroke="#1d1d8f" stroke-width="2.3"/><text transform="translate(681.7 291.2) scale(0.78 1)" font-size="14.0" fill="#20208e" text-anchor="start" textLength="120.0" lengthAdjust="spacing">{WRFLASH<tspan dy="-1.68">_</tspan><tspan dy="1.68">I2C}</tspan></text><line x1="809.4" y1="302.4" x2="826.7" y2="319.7" stroke="#18a018" stroke-width="1.1"/><line x1="826.7" y1="320.0" x2="948.5" y2="320.0" stroke="#18a018" stroke-width="2"/><rect x="943.4" y="317.1" width="5.2" height="5.2" fill="none" stroke="#18a018" stroke-width="1"/><text transform="translate(827.6 316.9) scale(0.78 1)" font-size="14.0" fill="#2b2b2b" text-anchor="start" textLength="146.0" lengthAdjust="spacing">WRFLASH<tspan dy="-1.68">_</tspan><tspan dy="1.68">I2C.SDA</tspan></text><line x1="809.4" y1="319.7" x2="826.7" y2="337.0" stroke="#18a018" stroke-width="1.1"/><line x1="826.7" y1="337.0" x2="948.5" y2="337.0" stroke="#18a018" stroke-width="2"/><rect x="943.4" y="334.4" width="5.2" height="5.2" fill="none" stroke="#18a018" stroke-width="1"/><text transform="translate(827.6 334.2) scale(0.78 1)" font-size="14.0" fill="#2b2b2b" text-anchor="start" textLength="144.3" lengthAdjust="spacing">WRFLASH<tspan dy="-1.68">_</tspan><tspan dy="1.68">I2C.SCL</tspan></text><text transform="translate(659.0 376.9) scale(0.78 1)" font-size="14.0" fill="#20208e" text-anchor="end" textLength="78.2" lengthAdjust="spacing">{WR<tspan dy="-1.68">_</tspan><tspan dy="1.68">DAC}</tspan></text><path d="M662.0 372.0 L666.5 367.5 L671.0 372.0 L666.5 376.5 Z" fill="none" stroke="#8f7326" stroke-width="1.3"/><line x1="671.0" y1="372.0" x2="774.4" y2="372.0" stroke="#1d1d8f" stroke-width="2.3"/><line x1="774.4" y1="372.0" x2="774.4" y2="406.5" stroke="#1d1d8f" stroke-width="2.3"/><text transform="translate(698.6 369.4) scale(0.78 1)" font-size="14.0" fill="#20208e" text-anchor="start" textLength="78.2" lengthAdjust="spacing">{WR<tspan dy="-1.68">_</tspan><tspan dy="1.68">DAC}</tspan></text><line x1="774.4" y1="371.9" x2="792.2" y2="389.2" stroke="#18a018" stroke-width="1.1"/><line x1="792.2" y1="389.0" x2="932.0" y2="389.0" stroke="#18a018" stroke-width="2"/><rect x="926.9" y="386.6" width="5.2" height="5.2" fill="none" stroke="#18a018" stroke-width="1"/><text transform="translate(801.6 386.4) scale(0.78 1)" font-size="14.0" fill="#2b2b2b" text-anchor="start" textLength="113.0" lengthAdjust="spacing">WR<tspan dy="-1.68">_</tspan><tspan dy="1.68">DAC.SCLK</tspan></text><line x1="774.4" y1="389.2" x2="792.2" y2="406.5" stroke="#18a018" stroke-width="1.1"/><line x1="792.2" y1="406.0" x2="932.0" y2="406.0" stroke="#18a018" stroke-width="2"/><rect x="926.9" y="403.9" width="5.2" height="5.2" fill="none" stroke="#18a018" stroke-width="1"/><text transform="translate(801.6 403.7) scale(0.78 1)" font-size="14.0" fill="#2b2b2b" text-anchor="start" textLength="99.1" lengthAdjust="spacing">WR<tspan dy="-1.68">_</tspan><tspan dy="1.68">DAC.DIN</tspan></text><line x1="774.4" y1="406.5" x2="792.2" y2="423.7" stroke="#18a018" stroke-width="1.1"/><line x1="792.2" y1="424.0" x2="932.0" y2="424.0" stroke="#18a018" stroke-width="2"/><rect x="926.9" y="421.1" width="5.2" height="5.2" fill="none" stroke="#18a018" stroke-width="1"/><text transform="translate(801.6 420.9) scale(0.78 1)" font-size="14.0" fill="#2b2b2b" text-anchor="start" textLength="115.6" lengthAdjust="spacing">WR<tspan dy="-1.68">_</tspan><tspan dy="1.68">DAC.SYNC</tspan></text><text transform="translate(1047.5 229.9) scale(0.78 1)" font-size="14.0" fill="#20208e" text-anchor="end" textLength="75.6" lengthAdjust="spacing">{WR<tspan dy="-1.68">_</tspan><tspan dy="1.68">CLK}</tspan></text><path d="M1050.5 225.0 L1055.0 220.5 L1059.5 225.0 L1055.0 229.5 Z" fill="none" stroke="#8f7326" stroke-width="1.3"/><line x1="1059.5" y1="225.0" x2="1163.0" y2="225.0" stroke="#1d1d8f" stroke-width="2.3"/><line x1="1163.0" y1="225.0" x2="1163.0" y2="466.0" stroke="#1d1d8f" stroke-width="2.3"/><text transform="translate(1078.2 222.4) scale(0.78 1)" font-size="14.0" fill="#20208e" text-anchor="start" textLength="75.6" lengthAdjust="spacing">{WR<tspan dy="-1.68">_</tspan><tspan dy="1.68">CLK}</tspan></text><line x1="1163.0" y1="224.9" x2="1180.0" y2="242.2" stroke="#18a018" stroke-width="1.1"/><line x1="1180.0" y1="242.0" x2="1346.0" y2="242.0" stroke="#18a018" stroke-width="2"/><rect x="1340.9" y="239.6" width="5.2" height="5.2" fill="none" stroke="#18a018" stroke-width="1"/><text transform="translate(1199.0 239.4) scale(0.78 1)" font-size="14.0" fill="#2b2b2b" text-anchor="start" textLength="171.2" lengthAdjust="spacing">WR<tspan dy="-1.68">_</tspan><tspan dy="1.68">CLK.25M</tspan><tspan dy="-1.68">_</tspan><tspan dy="1.68">HELPER</tspan></text><line x1="1163.0" y1="242.2" x2="1180.0" y2="259.5" stroke="#18a018" stroke-width="1.1"/><line x1="1180.0" y1="259.0" x2="1346.0" y2="259.0" stroke="#18a018" stroke-width="2"/><rect x="1340.9" y="256.9" width="5.2" height="5.2" fill="none" stroke="#18a018" stroke-width="1"/><text transform="translate(1199.0 256.7) scale(0.78 1)" font-size="14.0" fill="#2b2b2b" text-anchor="start" textLength="100.8" lengthAdjust="spacing">WR<tspan dy="-1.68">_</tspan><tspan dy="1.68">CLK.PPS</tspan></text><line x1="1163.0" y1="259.5" x2="1180.0" y2="276.7" stroke="#18a018" stroke-width="1.1"/><line x1="1180.0" y1="277.0" x2="1346.0" y2="277.0" stroke="#18a018" stroke-width="2"/><rect x="1340.9" y="274.1" width="5.2" height="5.2" fill="none" stroke="#18a018" stroke-width="1"/><text transform="translate(1199.0 273.9) scale(0.78 1)" font-size="14.0" fill="#2b2b2b" text-anchor="start" textLength="131.3" lengthAdjust="spacing">WR<tspan dy="-1.68">_</tspan><tspan dy="1.68">CLK.ABSCAL</tspan></text><line x1="1163.0" y1="276.7" x2="1180.0" y2="294.0" stroke="#18a018" stroke-width="1.1"/><line x1="1180.0" y1="294.0" x2="1346.0" y2="294.0" stroke="#18a018" stroke-width="2"/><rect x="1340.9" y="291.4" width="5.2" height="5.2" fill="none" stroke="#18a018" stroke-width="1"/><text transform="translate(1199.0 291.2) scale(0.78 1)" font-size="14.0" fill="#2b2b2b" text-anchor="start" textLength="120.8" lengthAdjust="spacing">WR<tspan dy="-1.68">_</tspan><tspan dy="1.68">CLK.AUX</tspan><tspan dy="-1.68">_</tspan><tspan dy="1.68">P</tspan></text><line x1="1163.0" y1="294.0" x2="1180.0" y2="311.3" stroke="#18a018" stroke-width="1.1"/><line x1="1180.0" y1="311.0" x2="1346.0" y2="311.0" stroke="#18a018" stroke-width="2"/><rect x="1340.9" y="308.7" width="5.2" height="5.2" fill="none" stroke="#18a018" stroke-width="1"/><text transform="translate(1199.0 308.5) scale(0.78 1)" font-size="14.0" fill="#2b2b2b" text-anchor="start" textLength="121.7" lengthAdjust="spacing">WR<tspan dy="-1.68">_</tspan><tspan dy="1.68">CLK.AUX</tspan><tspan dy="-1.68">_</tspan><tspan dy="1.68">N</tspan></text><line x1="1163.0" y1="311.3" x2="1180.0" y2="328.5" stroke="#18a018" stroke-width="1.1"/><line x1="1180.0" y1="329.0" x2="1346.0" y2="329.0" stroke="#18a018" stroke-width="2"/><rect x="1340.9" y="325.9" width="5.2" height="5.2" fill="none" stroke="#18a018" stroke-width="1"/><text transform="translate(1199.0 325.7) scale(0.78 1)" font-size="14.0" fill="#2b2b2b" text-anchor="start" textLength="127.8" lengthAdjust="spacing">WR<tspan dy="-1.68">_</tspan><tspan dy="1.68">CLK.MAIN</tspan><tspan dy="-1.68">_</tspan><tspan dy="1.68">P</tspan></text><line x1="1163.0" y1="328.6" x2="1180.0" y2="345.8" stroke="#18a018" stroke-width="1.1"/><line x1="1180.0" y1="346.0" x2="1346.0" y2="346.0" stroke="#18a018" stroke-width="2"/><rect x="1340.9" y="343.2" width="5.2" height="5.2" fill="none" stroke="#18a018" stroke-width="1"/><text transform="translate(1199.0 343.0) scale(0.78 1)" font-size="14.0" fill="#2b2b2b" text-anchor="start" textLength="128.6" lengthAdjust="spacing">WR<tspan dy="-1.68">_</tspan><tspan dy="1.68">CLK.MAIN</tspan><tspan dy="-1.68">_</tspan><tspan dy="1.68">N</tspan></text><line x1="1163.0" y1="345.8" x2="1180.0" y2="363.1" stroke="#18a018" stroke-width="1.1"/><line x1="1180.0" y1="363.0" x2="1346.0" y2="363.0" stroke="#18a018" stroke-width="2"/><rect x="1340.9" y="360.5" width="5.2" height="5.2" fill="none" stroke="#18a018" stroke-width="1"/><text transform="translate(1199.0 360.3) scale(0.78 1)" font-size="14.0" fill="#2b2b2b" text-anchor="start" textLength="151.2" lengthAdjust="spacing">WR<tspan dy="-1.68">_</tspan><tspan dy="1.68">CLK.HELPER</tspan><tspan dy="-1.68">_</tspan><tspan dy="1.68">P</tspan></text><line x1="1163.0" y1="363.1" x2="1180.0" y2="380.4" stroke="#18a018" stroke-width="1.1"/><line x1="1180.0" y1="380.0" x2="1346.0" y2="380.0" stroke="#18a018" stroke-width="2"/><rect x="1340.9" y="377.8" width="5.2" height="5.2" fill="none" stroke="#18a018" stroke-width="1"/><text transform="translate(1199.0 377.6) scale(0.78 1)" font-size="14.0" fill="#2b2b2b" text-anchor="start" textLength="152.1" lengthAdjust="spacing">WR<tspan dy="-1.68">_</tspan><tspan dy="1.68">CLK.HELPER</tspan><tspan dy="-1.68">_</tspan><tspan dy="1.68">N</tspan></text><line x1="1163.0" y1="380.4" x2="1180.0" y2="397.6" stroke="#18a018" stroke-width="1.1"/><line x1="1180.0" y1="398.0" x2="1346.0" y2="398.0" stroke="#18a018" stroke-width="2"/><rect x="1340.9" y="395.0" width="5.2" height="5.2" fill="none" stroke="#18a018" stroke-width="1"/><text transform="translate(1199.0 394.8) scale(0.78 1)" font-size="14.0" fill="#2b2b2b" text-anchor="start" textLength="112.1" lengthAdjust="spacing">WR<tspan dy="-1.68">_</tspan><tspan dy="1.68">CLK.RSTN</tspan></text><line x1="1163.0" y1="397.6" x2="1180.0" y2="414.9" stroke="#18a018" stroke-width="1.1"/><line x1="1180.0" y1="415.0" x2="1346.0" y2="415.0" stroke="#18a018" stroke-width="2"/><rect x="1340.9" y="412.3" width="5.2" height="5.2" fill="none" stroke="#18a018" stroke-width="1"/><text transform="translate(1199.0 412.1) scale(0.78 1)" font-size="14.0" fill="#2b2b2b" text-anchor="start" textLength="143.4" lengthAdjust="spacing">WR<tspan dy="-1.68">_</tspan><tspan dy="1.68">CLK.SPI</tspan><tspan dy="-1.68">_</tspan><tspan dy="1.68">MOSI</tspan></text><line x1="1163.0" y1="414.9" x2="1180.0" y2="432.2" stroke="#18a018" stroke-width="1.1"/><line x1="1180.0" y1="432.0" x2="1346.0" y2="432.0" stroke="#18a018" stroke-width="2"/><rect x="1340.9" y="429.6" width="5.2" height="5.2" fill="none" stroke="#18a018" stroke-width="1"/><text transform="translate(1199.0 429.4) scale(0.78 1)" font-size="14.0" fill="#2b2b2b" text-anchor="start" textLength="135.6" lengthAdjust="spacing">WR<tspan dy="-1.68">_</tspan><tspan dy="1.68">CLK.SPI</tspan><tspan dy="-1.68">_</tspan><tspan dy="1.68">SCK</tspan></text><line x1="1163.0" y1="432.2" x2="1180.0" y2="449.4" stroke="#18a018" stroke-width="1.1"/><line x1="1180.0" y1="449.0" x2="1346.0" y2="449.0" stroke="#18a018" stroke-width="2"/><rect x="1340.9" y="446.8" width="5.2" height="5.2" fill="none" stroke="#18a018" stroke-width="1"/><text transform="translate(1199.0 446.6) scale(0.78 1)" font-size="14.0" fill="#2b2b2b" text-anchor="start" textLength="143.4" lengthAdjust="spacing">WR<tspan dy="-1.68">_</tspan><tspan dy="1.68">CLK.SPI</tspan><tspan dy="-1.68">_</tspan><tspan dy="1.68">MISO</tspan></text><line x1="1163.0" y1="449.4" x2="1180.0" y2="466.7" stroke="#18a018" stroke-width="1.1"/><line x1="1180.0" y1="467.0" x2="1346.0" y2="467.0" stroke="#18a018" stroke-width="2"/><rect x="1340.9" y="464.1" width="5.2" height="5.2" fill="none" stroke="#18a018" stroke-width="1"/><text transform="translate(1199.0 463.9) scale(0.78 1)" font-size="14.0" fill="#2b2b2b" text-anchor="start" textLength="216.4" lengthAdjust="spacing">WR<tspan dy="-1.68">_</tspan><tspan dy="1.68">CLK.SPI</tspan><tspan dy="-1.68">_</tspan><tspan dy="1.68">HELPER</tspan><tspan dy="-1.68">_</tspan><tspan dy="1.68">CS</tspan><tspan dy="-1.68">_</tspan><tspan dy="1.68">N</tspan></text><line x1="1163.0" y1="466.7" x2="1180.0" y2="484.0" stroke="#18a018" stroke-width="1.1"/><line x1="1180.0" y1="484.0" x2="1346.0" y2="484.0" stroke="#18a018" stroke-width="2"/><rect x="1340.9" y="481.4" width="5.2" height="5.2" fill="none" stroke="#18a018" stroke-width="1"/><text transform="translate(1199.0 481.2) scale(0.78 1)" font-size="14.0" fill="#2b2b2b" text-anchor="start" textLength="193.0" lengthAdjust="spacing">WR<tspan dy="-1.68">_</tspan><tspan dy="1.68">CLK.SPI</tspan><tspan dy="-1.68">_</tspan><tspan dy="1.68">MAIN</tspan><tspan dy="-1.68">_</tspan><tspan dy="1.68">CS</tspan><tspan dy="-1.68">_</tspan><tspan dy="1.68">N</tspan></text><text transform="translate(1737.4 229.7) scale(0.78 1)" font-size="14.0" fill="#20208e" text-anchor="end" textLength="47.0" lengthAdjust="spacing">{PCIE}</text><path d="M1740.3 224.8 L1744.8 220.3 L1749.3 224.8 L1744.8 229.3 Z" fill="none" stroke="#8f7326" stroke-width="1.3"/><line x1="1749.3" y1="224.8" x2="1818.2" y2="224.8" stroke="#1d1d8f" stroke-width="2.3"/><text transform="translate(1760.3 222.2) scale(0.78 1)" font-size="14.0" fill="#20208e" text-anchor="start" textLength="47.0" lengthAdjust="spacing">{PCIE}</text><line x1="1818.2" y1="224.8" x2="1835.2" y2="242.3" stroke="#18a018" stroke-width="1.3"/><line x1="1835.2" y1="242.0" x2="2001.0" y2="242.0" stroke="#18a018" stroke-width="2"/><rect x="1996.0" y="239.7" width="5.2" height="5.2" fill="none" stroke="#18a018" stroke-width="1"/><text transform="translate(1871.0 239.5) scale(0.78 1)" font-size="14.0" fill="#2b2b2b" text-anchor="start" textLength="113.0" lengthAdjust="spacing">PCIE.PERST<tspan dy="-1.68">_</tspan><tspan dy="1.68">N</tspan></text><path d="M783.5 409.5 V488.5 M743 449.5 H822.6" stroke="#7a7a7a" stroke-width="1"/><text transform="translate(593.5 497.0) scale(0.78 1)" font-size="13.4" fill="#0d6a6a" text-anchor="start" textLength="46.9" lengthAdjust="spacing">IC14E</text><text transform="translate(593.5 513.7) scale(0.78 1)" font-size="13.4" fill="#0d6a6a" text-anchor="start" textLength="181.8" lengthAdjust="spacing">XCZU4CG-1SFVC7B4E</text><rect x="593" y="518.5" width="363.3" height="700" fill="#ffffc2" stroke="#a02a2a" stroke-width="1.2"/><path d="M947.3 1100 V527.5 H956.3" fill="none" stroke="#a02a2a" stroke-width="1"/><text transform="translate(945.0 540.7) scale(0.78 1)" font-size="15.7" fill="#0d6a6a" text-anchor="end" textLength="229.2" lengthAdjust="spacing">IO<tspan dy="-1.88">_</tspan><tspan dy="1.88">L1P</tspan><tspan dy="-1.88">_</tspan><tspan dy="1.88">T0L</tspan><tspan dy="-1.88">_</tspan><tspan dy="1.88">N0</tspan><tspan dy="-1.88">_</tspan><tspan dy="1.88">DBC</tspan><tspan dy="-1.88">_</tspan><tspan dy="1.88">64</tspan></text><text transform="translate(958.5 532.7) scale(0.9 1)" font-size="15.6" fill="#b81c1c" text-anchor="start" textLength="30.9" lengthAdjust="spacing">AC9</text><line x1="956.3" y1="535.5" x2="990.0" y2="535.5" stroke="#a02a2a" stroke-width="1"/><line x1="990.0" y1="535.0" x2="1191.0" y2="535.0" stroke="#18a018" stroke-width="2"/><rect x="1186.1" y="532.7" width="5.2" height="5.2" fill="none" stroke="#18a018" stroke-width="1"/><text transform="translate(1051.5 532.4) scale(0.78 1)" font-size="14.0" fill="#2b2b2b" text-anchor="start" textLength="108.6" lengthAdjust="spacing">VMEF.D<tspan dy="-1.68">_</tspan><tspan dy="1.68">OE</tspan><tspan dy="-1.68">_</tspan><tspan dy="1.68">N</tspan></text><text transform="translate(945.0 558.0) scale(0.78 1)" font-size="15.7" fill="#0d6a6a" text-anchor="end" textLength="230.3" lengthAdjust="spacing">IO<tspan dy="-1.88">_</tspan><tspan dy="1.88">L1N</tspan><tspan dy="-1.88">_</tspan><tspan dy="1.88">T0L</tspan><tspan dy="-1.88">_</tspan><tspan dy="1.88">N1</tspan><tspan dy="-1.88">_</tspan><tspan dy="1.88">DBC</tspan><tspan dy="-1.88">_</tspan><tspan dy="1.88">64</tspan></text><text transform="translate(958.5 550.0) scale(0.9 1)" font-size="15.6" fill="#b81c1c" text-anchor="start" textLength="30.9" lengthAdjust="spacing">AD9</text><line x1="956.3" y1="552.5" x2="990.0" y2="552.5" stroke="#a02a2a" stroke-width="1"/><line x1="990.0" y1="553.0" x2="1191.0" y2="553.0" stroke="#18a018" stroke-width="2"/><rect x="1186.1" y="550.0" width="5.2" height="5.2" fill="none" stroke="#18a018" stroke-width="1"/><text transform="translate(1051.5 549.7) scale(0.78 1)" font-size="14.0" fill="#2b2b2b" text-anchor="start" textLength="74.8" lengthAdjust="spacing">VMEF.D20</text><text transform="translate(945.0 575.2) scale(0.78 1)" font-size="15.7" fill="#0d6a6a" text-anchor="end" textLength="177.6" lengthAdjust="spacing">IO<tspan dy="-1.88">_</tspan><tspan dy="1.88">L2P</tspan><tspan dy="-1.88">_</tspan><tspan dy="1.88">T0L</tspan><tspan dy="-1.88">_</tspan><tspan dy="1.88">N2</tspan><tspan dy="-1.88">_</tspan><tspan dy="1.88">64</tspan></text><text transform="translate(958.5 567.2) scale(0.9 1)" font-size="15.6" fill="#b81c1c" text-anchor="start" textLength="30.0" lengthAdjust="spacing">AE9</text><line x1="956.3" y1="569.5" x2="990.0" y2="569.5" stroke="#a02a2a" stroke-width="1"/><line x1="990.0" y1="570.0" x2="1191.0" y2="570.0" stroke="#18a018" stroke-width="2"/><rect x="1186.1" y="567.2" width="5.2" height="5.2" fill="none" stroke="#18a018" stroke-width="1"/><text transform="translate(1051.5 566.9) scale(0.78 1)" font-size="14.0" fill="#2b2b2b" text-anchor="start" textLength="74.8" lengthAdjust="spacing">VMEF.D18</text><text transform="translate(945.0 592.5) scale(0.78 1)" font-size="15.7" fill="#0d6a6a" text-anchor="end" textLength="178.6" lengthAdjust="spacing">IO<tspan dy="-1.88">_</tspan><tspan dy="1.88">L2N</tspan><tspan dy="-1.88">_</tspan><tspan dy="1.88">T0L</tspan><tspan dy="-1.88">_</tspan><tspan dy="1.88">N3</tspan><tspan dy="-1.88">_</tspan><tspan dy="1.88">64</tspan></text><text transform="translate(958.5 584.5) scale(0.9 1)" font-size="15.6" fill="#b81c1c" text-anchor="start" textLength="30.0" lengthAdjust="spacing">AE8</text><line x1="956.3" y1="587.5" x2="990.0" y2="587.5" stroke="#a02a2a" stroke-width="1"/><line x1="990.0" y1="587.0" x2="1191.0" y2="587.0" stroke="#18a018" stroke-width="2"/><rect x="1186.1" y="584.5" width="5.2" height="5.2" fill="none" stroke="#18a018" stroke-width="1"/><text transform="translate(1051.5 584.2) scale(0.78 1)" font-size="14.0" fill="#2b2b2b" text-anchor="start" textLength="170.4" lengthAdjust="spacing">F<tspan dy="-1.68">_</tspan><tspan dy="1.68">IOEXP</tspan><tspan dy="-1.68">_</tspan><tspan dy="1.68">HWBYTE2</tspan><tspan dy="-1.68">_</tspan><tspan dy="1.68">D</tspan></text><text transform="translate(945.0 609.8) scale(0.78 1)" font-size="15.7" fill="#0d6a6a" text-anchor="end" textLength="249.7" lengthAdjust="spacing">IO<tspan dy="-1.88">_</tspan><tspan dy="1.88">L3P</tspan><tspan dy="-1.88">_</tspan><tspan dy="1.88">T0L</tspan><tspan dy="-1.88">_</tspan><tspan dy="1.88">N4</tspan><tspan dy="-1.88">_</tspan><tspan dy="1.88">AD15P</tspan><tspan dy="-1.88">_</tspan><tspan dy="1.88">64</tspan></text><text transform="translate(958.5 601.8) scale(0.9 1)" font-size="15.6" fill="#b81c1c" text-anchor="start" textLength="30.0" lengthAdjust="spacing">AB8</text><line x1="956.3" y1="604.5" x2="990.0" y2="604.5" stroke="#a02a2a" stroke-width="1"/><line x1="990.0" y1="604.0" x2="1191.0" y2="604.0" stroke="#18a018" stroke-width="2"/><rect x="1186.1" y="601.8" width="5.2" height="5.2" fill="none" stroke="#18a018" stroke-width="1"/><text transform="translate(1051.5 601.5) scale(0.78 1)" font-size="14.0" fill="#2b2b2b" text-anchor="start" textLength="74.8" lengthAdjust="spacing">VMEF.D22</text><text transform="translate(945.0 627.0) scale(0.78 1)" font-size="15.7" fill="#0d6a6a" text-anchor="end" textLength="251.8" lengthAdjust="spacing">IO<tspan dy="-1.88">_</tspan><tspan dy="1.88">L3N</tspan><tspan dy="-1.88">_</tspan><tspan dy="1.88">T0L</tspan><tspan dy="-1.88">_</tspan><tspan dy="1.88">N5</tspan><tspan dy="-1.88">_</tspan><tspan dy="1.88">AD15N</tspan><tspan dy="-1.88">_</tspan><tspan dy="1.88">64</tspan></text><text transform="translate(958.5 619.0) scale(0.9 1)" font-size="15.6" fill="#b81c1c" text-anchor="start" textLength="30.9" lengthAdjust="spacing">AC8</text><line x1="956.3" y1="621.5" x2="990.0" y2="621.5" stroke="#a02a2a" stroke-width="1"/><line x1="990.0" y1="622.0" x2="1191.0" y2="622.0" stroke="#18a018" stroke-width="2"/><rect x="1186.1" y="619.0" width="5.2" height="5.2" fill="none" stroke="#18a018" stroke-width="1"/><text transform="translate(1051.5 618.8) scale(0.78 1)" font-size="14.0" fill="#2b2b2b" text-anchor="start" textLength="66.1" lengthAdjust="spacing">VMEF.D4</text><text transform="translate(945.0 644.3) scale(0.78 1)" font-size="15.7" fill="#0d6a6a" text-anchor="end" textLength="293.8" lengthAdjust="spacing">IO<tspan dy="-1.88">_</tspan><tspan dy="1.88">L4P</tspan><tspan dy="-1.88">_</tspan><tspan dy="1.88">T0U</tspan><tspan dy="-1.88">_</tspan><tspan dy="1.88">N6</tspan><tspan dy="-1.88">_</tspan><tspan dy="1.88">DBC</tspan><tspan dy="-1.88">_</tspan><tspan dy="1.88">AD7P</tspan><tspan dy="-1.88">_</tspan><tspan dy="1.88">64</tspan></text><text transform="translate(958.5 636.3) scale(0.9 1)" font-size="15.6" fill="#b81c1c" text-anchor="start" textLength="30.9" lengthAdjust="spacing">AD7</text><line x1="956.3" y1="638.5" x2="990.0" y2="638.5" stroke="#a02a2a" stroke-width="1"/><line x1="990.0" y1="639.0" x2="1191.0" y2="639.0" stroke="#18a018" stroke-width="2"/><rect x="1186.1" y="636.3" width="5.2" height="5.2" fill="none" stroke="#18a018" stroke-width="1"/><text transform="translate(1051.5 636.0) scale(0.78 1)" font-size="14.0" fill="#2b2b2b" text-anchor="start" textLength="74.8" lengthAdjust="spacing">VMEF.D21</text><text transform="translate(945.0 661.6) scale(0.78 1)" font-size="15.7" fill="#0d6a6a" text-anchor="end" textLength="295.9" lengthAdjust="spacing">IO<tspan dy="-1.88">_</tspan><tspan dy="1.88">L4N</tspan><tspan dy="-1.88">_</tspan><tspan dy="1.88">T0U</tspan><tspan dy="-1.88">_</tspan><tspan dy="1.88">N7</tspan><tspan dy="-1.88">_</tspan><tspan dy="1.88">DBC</tspan><tspan dy="-1.88">_</tspan><tspan dy="1.88">AD7N</tspan><tspan dy="-1.88">_</tspan><tspan dy="1.88">64</tspan></text><text transform="translate(958.5 653.6) scale(0.9 1)" font-size="15.6" fill="#b81c1c" text-anchor="start" textLength="30.0" lengthAdjust="spacing">AE7</text><line x1="956.3" y1="656.5" x2="990.0" y2="656.5" stroke="#a02a2a" stroke-width="1"/><line x1="990.0" y1="656.0" x2="1191.0" y2="656.0" stroke="#18a018" stroke-width="2"/><rect x="1186.1" y="653.6" width="5.2" height="5.2" fill="none" stroke="#18a018" stroke-width="1"/><text transform="translate(1051.5 653.3) scale(0.78 1)" font-size="14.0" fill="#2b2b2b" text-anchor="start" textLength="30.4" lengthAdjust="spacing">HP4</text><path d="M986.4 652.2 L994.4 660.2 M986.4 660.2 L994.4 652.2" stroke="#2525a0" stroke-width="1.3"/><text transform="translate(945.0 678.9) scale(0.78 1)" font-size="15.7" fill="#0d6a6a" text-anchor="end" textLength="252.9" lengthAdjust="spacing">IO<tspan dy="-1.88">_</tspan><tspan dy="1.88">L5P</tspan><tspan dy="-1.88">_</tspan><tspan dy="1.88">T0U</tspan><tspan dy="-1.88">_</tspan><tspan dy="1.88">N8</tspan><tspan dy="-1.88">_</tspan><tspan dy="1.88">AD14P</tspan><tspan dy="-1.88">_</tspan><tspan dy="1.88">64</tspan></text><text transform="translate(958.5 670.9) scale(0.9 1)" font-size="15.6" fill="#b81c1c" text-anchor="start" textLength="30.0" lengthAdjust="spacing">AB7</text><line x1="956.3" y1="673.5" x2="990.0" y2="673.5" stroke="#a02a2a" stroke-width="1"/><line x1="990.0" y1="673.0" x2="1191.0" y2="673.0" stroke="#18a018" stroke-width="2"/><rect x="1186.1" y="670.9" width="5.2" height="5.2" fill="none" stroke="#18a018" stroke-width="1"/><text transform="translate(1051.5 670.6) scale(0.78 1)" font-size="14.0" fill="#2b2b2b" text-anchor="start" textLength="30.4" lengthAdjust="spacing">HP9</text><path d="M986.4 669.5 L994.4 677.5 M986.4 677.5 L994.4 669.5" stroke="#2525a0" stroke-width="1.3"/><text transform="translate(945.0 696.1) scale(0.78 1)" font-size="15.7" fill="#0d6a6a" text-anchor="end" textLength="255.0" lengthAdjust="spacing">IO<tspan dy="-1.88">_</tspan><tspan dy="1.88">L5N</tspan><tspan dy="-1.88">_</tspan><tspan dy="1.88">T0U</tspan><tspan dy="-1.88">_</tspan><tspan dy="1.88">N9</tspan><tspan dy="-1.88">_</tspan><tspan dy="1.88">AD14N</tspan><tspan dy="-1.88">_</tspan><tspan dy="1.88">64</tspan></text><text transform="translate(958.5 688.1) scale(0.9 1)" font-size="15.6" fill="#b81c1c" text-anchor="start" textLength="30.9" lengthAdjust="spacing">AC7</text><line x1="956.3" y1="690.5" x2="990.0" y2="690.5" stroke="#a02a2a" stroke-width="1"/><line x1="990.0" y1="691.0" x2="1191.0" y2="691.0" stroke="#18a018" stroke-width="2"/><rect x="1186.1" y="688.1" width="5.2" height="5.2" fill="none" stroke="#18a018" stroke-width="1"/><text transform="translate(1051.5 687.8) scale(0.78 1)" font-size="14.0" fill="#2b2b2b" text-anchor="start" textLength="66.1" lengthAdjust="spacing">VMEF.D5</text><text transform="translate(945.0 713.4) scale(0.78 1)" font-size="15.7" fill="#0d6a6a" text-anchor="end" textLength="252.9" lengthAdjust="spacing">IO<tspan dy="-1.88">_</tspan><tspan dy="1.88">L6P</tspan><tspan dy="-1.88">_</tspan><tspan dy="1.88">T0U</tspan><tspan dy="-1.88">_</tspan><tspan dy="1.88">N10</tspan><tspan dy="-1.88">_</tspan><tspan dy="1.88">AD6P</tspan><tspan dy="-1.88">_</tspan><tspan dy="1.88">64</tspan></text><text transform="translate(958.5 705.4) scale(0.9 1)" font-size="15.6" fill="#b81c1c" text-anchor="start" textLength="30.0" lengthAdjust="spacing">AB6</text><line x1="956.3" y1="708.5" x2="990.0" y2="708.5" stroke="#a02a2a" stroke-width="1"/><line x1="990.0" y1="708.0" x2="1191.0" y2="708.0" stroke="#18a018" stroke-width="2"/><rect x="1186.1" y="705.4" width="5.2" height="5.2" fill="none" stroke="#18a018" stroke-width="1"/><text transform="translate(1051.5 705.1) scale(0.78 1)" font-size="14.0" fill="#2b2b2b" text-anchor="start" textLength="74.8" lengthAdjust="spacing">VMEF.D15</text><text transform="translate(945.0 730.7) scale(0.78 1)" font-size="15.7" fill="#0d6a6a" text-anchor="end" textLength="253.6" lengthAdjust="spacing">IO<tspan dy="-1.88">_</tspan><tspan dy="1.88">L6N</tspan><tspan dy="-1.88">_</tspan><tspan dy="1.88">T0U</tspan><tspan dy="-1.88">_</tspan><tspan dy="1.88">N11</tspan><tspan dy="-1.88">_</tspan><tspan dy="1.88">AD6N</tspan><tspan dy="-1.88">_</tspan><tspan dy="1.88">64</tspan></text><text transform="translate(958.5 722.7) scale(0.9 1)" font-size="15.6" fill="#b81c1c" text-anchor="start" textLength="30.9" lengthAdjust="spacing">AC6</text><line x1="956.3" y1="725.5" x2="990.0" y2="725.5" stroke="#a02a2a" stroke-width="1"/><line x1="990.0" y1="725.0" x2="1191.0" y2="725.0" stroke="#18a018" stroke-width="2"/><rect x="1186.1" y="722.7" width="5.2" height="5.2" fill="none" stroke="#18a018" stroke-width="1"/><text transform="translate(1051.5 722.4) scale(0.78 1)" font-size="14.0" fill="#2b2b2b" text-anchor="start" textLength="66.1" lengthAdjust="spacing">VMEF.D2</text><text transform="translate(945.0 747.9) scale(0.78 1)" font-size="15.7" fill="#0d6a6a" text-anchor="end" textLength="302.4" lengthAdjust="spacing">IO<tspan dy="-1.88">_</tspan><tspan dy="1.88">L7P</tspan><tspan dy="-1.88">_</tspan><tspan dy="1.88">T1L</tspan><tspan dy="-1.88">_</tspan><tspan dy="1.88">N0</tspan><tspan dy="-1.88">_</tspan><tspan dy="1.88">QBC</tspan><tspan dy="-1.88">_</tspan><tspan dy="1.88">AD13P</tspan><tspan dy="-1.88">_</tspan><tspan dy="1.88">64</tspan></text><text transform="translate(958.5 739.9) scale(0.9 1)" font-size="15.6" fill="#b81c1c" text-anchor="start" textLength="31.8" lengthAdjust="spacing">AG9</text><line x1="956.3" y1="742.5" x2="990.0" y2="742.5" stroke="#a02a2a" stroke-width="1"/><line x1="990.0" y1="743.0" x2="1191.0" y2="743.0" stroke="#18a018" stroke-width="2"/><rect x="1186.1" y="739.9" width="5.2" height="5.2" fill="none" stroke="#18a018" stroke-width="1"/><text transform="translate(1051.5 739.6) scale(0.78 1)" font-size="14.0" fill="#2b2b2b" text-anchor="start" textLength="66.1" lengthAdjust="spacing">VMEF.D7</text><text transform="translate(945.0 765.2) scale(0.78 1)" font-size="15.7" fill="#0d6a6a" text-anchor="end" textLength="304.5" lengthAdjust="spacing">IO<tspan dy="-1.88">_</tspan><tspan dy="1.88">L7N</tspan><tspan dy="-1.88">_</tspan><tspan dy="1.88">T1L</tspan><tspan dy="-1.88">_</tspan><tspan dy="1.88">N1</tspan><tspan dy="-1.88">_</tspan><tspan dy="1.88">QBC</tspan><tspan dy="-1.88">_</tspan><tspan dy="1.88">AD13N</tspan><tspan dy="-1.88">_</tspan><tspan dy="1.88">64</tspan></text><text transform="translate(958.5 757.2) scale(0.9 1)" font-size="15.6" fill="#b81c1c" text-anchor="start" textLength="30.9" lengthAdjust="spacing">AH9</text><line x1="956.3" y1="759.5" x2="990.0" y2="759.5" stroke="#a02a2a" stroke-width="1"/><line x1="990.0" y1="760.0" x2="1191.0" y2="760.0" stroke="#18a018" stroke-width="2"/><rect x="1186.1" y="757.2" width="5.2" height="5.2" fill="none" stroke="#18a018" stroke-width="1"/><text transform="translate(1051.5 756.9) scale(0.78 1)" font-size="14.0" fill="#2b2b2b" text-anchor="start" textLength="66.1" lengthAdjust="spacing">VMEF.D6</text><text transform="translate(945.0 782.5) scale(0.78 1)" font-size="15.7" fill="#0d6a6a" text-anchor="end" textLength="238.9" lengthAdjust="spacing">IO<tspan dy="-1.88">_</tspan><tspan dy="1.88">L8P</tspan><tspan dy="-1.88">_</tspan><tspan dy="1.88">T1L</tspan><tspan dy="-1.88">_</tspan><tspan dy="1.88">N2</tspan><tspan dy="-1.88">_</tspan><tspan dy="1.88">AD5P</tspan><tspan dy="-1.88">_</tspan><tspan dy="1.88">64</tspan></text><text transform="translate(958.5 774.5) scale(0.9 1)" font-size="15.6" fill="#b81c1c" text-anchor="start" textLength="29.1" lengthAdjust="spacing">AF8</text><line x1="956.3" y1="777.5" x2="990.0" y2="777.5" stroke="#a02a2a" stroke-width="1"/><line x1="990.0" y1="777.0" x2="1191.0" y2="777.0" stroke="#18a018" stroke-width="2"/><rect x="1186.1" y="774.5" width="5.2" height="5.2" fill="none" stroke="#18a018" stroke-width="1"/><text transform="translate(1051.5 774.2) scale(0.78 1)" font-size="14.0" fill="#2b2b2b" text-anchor="start" textLength="74.8" lengthAdjust="spacing">VMEF.D19</text><text transform="translate(945.0 799.7) scale(0.78 1)" font-size="15.7" fill="#0d6a6a" text-anchor="end" textLength="241.0" lengthAdjust="spacing">IO<tspan dy="-1.88">_</tspan><tspan dy="1.88">L8N</tspan><tspan dy="-1.88">_</tspan><tspan dy="1.88">T1L</tspan><tspan dy="-1.88">_</tspan><tspan dy="1.88">N3</tspan><tspan dy="-1.88">_</tspan><tspan dy="1.88">AD5N</tspan><tspan dy="-1.88">_</tspan><tspan dy="1.88">64</tspan></text><text transform="translate(958.5 791.7) scale(0.9 1)" font-size="15.6" fill="#b81c1c" text-anchor="start" textLength="31.8" lengthAdjust="spacing">AG8</text><line x1="956.3" y1="794.5" x2="990.0" y2="794.5" stroke="#a02a2a" stroke-width="1"/><line x1="990.0" y1="794.0" x2="1191.0" y2="794.0" stroke="#18a018" stroke-width="2"/><rect x="1186.1" y="791.7" width="5.2" height="5.2" fill="none" stroke="#18a018" stroke-width="1"/><text transform="translate(1051.5 791.4) scale(0.78 1)" font-size="14.0" fill="#2b2b2b" text-anchor="start" textLength="74.8" lengthAdjust="spacing">VMEF.D16</text><text transform="translate(945.0 817.0) scale(0.78 1)" font-size="15.7" fill="#0d6a6a" text-anchor="end" textLength="249.7" lengthAdjust="spacing">IO<tspan dy="-1.88">_</tspan><tspan dy="1.88">L9P</tspan><tspan dy="-1.88">_</tspan><tspan dy="1.88">T1L</tspan><tspan dy="-1.88">_</tspan><tspan dy="1.88">N4</tspan><tspan dy="-1.88">_</tspan><tspan dy="1.88">AD12P</tspan><tspan dy="-1.88">_</tspan><tspan dy="1.88">64</tspan></text><text transform="translate(958.5 809.0) scale(0.9 1)" font-size="15.6" fill="#b81c1c" text-anchor="start" textLength="30.9" lengthAdjust="spacing">AH8</text><line x1="956.3" y1="811.5" x2="990.0" y2="811.5" stroke="#a02a2a" stroke-width="1"/><line x1="990.0" y1="812.0" x2="1191.0" y2="812.0" stroke="#18a018" stroke-width="2"/><rect x="1186.1" y="809.0" width="5.2" height="5.2" fill="none" stroke="#18a018" stroke-width="1"/><text transform="translate(1051.5 808.7) scale(0.78 1)" font-size="14.0" fill="#2b2b2b" text-anchor="start" textLength="74.8" lengthAdjust="spacing">VMEF.D31</text><text transform="translate(945.0 834.3) scale(0.78 1)" font-size="15.7" fill="#0d6a6a" text-anchor="end" textLength="251.8" lengthAdjust="spacing">IO<tspan dy="-1.88">_</tspan><tspan dy="1.88">L9N</tspan><tspan dy="-1.88">_</tspan><tspan dy="1.88">T1L</tspan><tspan dy="-1.88">_</tspan><tspan dy="1.88">N5</tspan><tspan dy="-1.88">_</tspan><tspan dy="1.88">AD12N</tspan><tspan dy="-1.88">_</tspan><tspan dy="1.88">64</tspan></text><text transform="translate(958.5 826.3) scale(0.9 1)" font-size="15.6" fill="#b81c1c" text-anchor="start" textLength="30.9" lengthAdjust="spacing">AH7</text><line x1="956.3" y1="828.5" x2="990.0" y2="828.5" stroke="#a02a2a" stroke-width="1"/><line x1="990.0" y1="829.0" x2="1191.0" y2="829.0" stroke="#18a018" stroke-width="2"/><rect x="1186.1" y="826.3" width="5.2" height="5.2" fill="none" stroke="#18a018" stroke-width="1"/><text transform="translate(1051.5 826.0) scale(0.78 1)" font-size="14.0" fill="#2b2b2b" text-anchor="start" textLength="66.1" lengthAdjust="spacing">VMEF.D3</text><text transform="translate(945.0 851.6) scale(0.78 1)" font-size="15.7" fill="#0d6a6a" text-anchor="end" textLength="305.6" lengthAdjust="spacing">IO<tspan dy="-1.88">_</tspan><tspan dy="1.88">L10P</tspan><tspan dy="-1.88">_</tspan><tspan dy="1.88">T1U</tspan><tspan dy="-1.88">_</tspan><tspan dy="1.88">N6</tspan><tspan dy="-1.88">_</tspan><tspan dy="1.88">QBC</tspan><tspan dy="-1.88">_</tspan><tspan dy="1.88">AD4P</tspan><tspan dy="-1.88">_</tspan><tspan dy="1.88">64</tspan></text><text transform="translate(958.5 843.6) scale(0.9 1)" font-size="15.6" fill="#b81c1c" text-anchor="start" textLength="31.8" lengthAdjust="spacing">AG6</text><line x1="956.3" y1="846.5" x2="990.0" y2="846.5" stroke="#a02a2a" stroke-width="1"/><line x1="990.0" y1="846.0" x2="1191.0" y2="846.0" stroke="#18a018" stroke-width="2"/><rect x="1186.1" y="843.6" width="5.2" height="5.2" fill="none" stroke="#18a018" stroke-width="1"/><text transform="translate(1051.5 843.3) scale(0.78 1)" font-size="14.0" fill="#2b2b2b" text-anchor="start" textLength="66.1" lengthAdjust="spacing">VMEF.D1</text><text transform="translate(945.0 868.8) scale(0.78 1)" font-size="15.7" fill="#0d6a6a" text-anchor="end" textLength="307.7" lengthAdjust="spacing">IO<tspan dy="-1.88">_</tspan><tspan dy="1.88">L10N</tspan><tspan dy="-1.88">_</tspan><tspan dy="1.88">T1U</tspan><tspan dy="-1.88">_</tspan><tspan dy="1.88">N7</tspan><tspan dy="-1.88">_</tspan><tspan dy="1.88">QBC</tspan><tspan dy="-1.88">_</tspan><tspan dy="1.88">AD4N</tspan><tspan dy="-1.88">_</tspan><tspan dy="1.88">64</tspan></text><text transform="translate(958.5 860.8) scale(0.9 1)" font-size="15.6" fill="#b81c1c" text-anchor="start" textLength="31.8" lengthAdjust="spacing">AG5</text><line x1="956.3" y1="863.5" x2="990.0" y2="863.5" stroke="#a02a2a" stroke-width="1"/><line x1="990.0" y1="863.0" x2="1191.0" y2="863.0" stroke="#18a018" stroke-width="2"/><rect x="1186.1" y="860.8" width="5.2" height="5.2" fill="none" stroke="#18a018" stroke-width="1"/><text transform="translate(1051.5 860.5) scale(0.78 1)" font-size="14.0" fill="#2b2b2b" text-anchor="start" textLength="66.1" lengthAdjust="spacing">VMEF.D0</text><text transform="translate(945.0 886.1) scale(0.78 1)" font-size="15.7" fill="#0d6a6a" text-anchor="end" textLength="229.9" lengthAdjust="spacing">IO<tspan dy="-1.88">_</tspan><tspan dy="1.88">L11P</tspan><tspan dy="-1.88">_</tspan><tspan dy="1.88">T1U</tspan><tspan dy="-1.88">_</tspan><tspan dy="1.88">N8</tspan><tspan dy="-1.88">_</tspan><tspan dy="1.88">GC</tspan><tspan dy="-1.88">_</tspan><tspan dy="1.88">64</tspan></text><text transform="translate(958.5 878.1) scale(0.9 1)" font-size="15.6" fill="#b81c1c" text-anchor="start" textLength="29.1" lengthAdjust="spacing">AF7</text><line x1="956.3" y1="880.5" x2="990.0" y2="880.5" stroke="#a02a2a" stroke-width="1"/><line x1="990.0" y1="881.0" x2="1191.0" y2="881.0" stroke="#18a018" stroke-width="2"/><rect x="1186.1" y="878.1" width="5.2" height="5.2" fill="none" stroke="#18a018" stroke-width="1"/><text transform="translate(1051.5 877.8) scale(0.78 1)" font-size="14.0" fill="#2b2b2b" text-anchor="start" textLength="129.5" lengthAdjust="spacing">GTH<tspan dy="-1.68">_</tspan><tspan dy="1.68">BCLK</tspan><tspan dy="-1.68">_</tspan><tspan dy="1.68">B1</tspan><tspan dy="-1.68">_</tspan><tspan dy="1.68">P</tspan></text><text transform="translate(945.0 903.4) scale(0.78 1)" font-size="15.7" fill="#0d6a6a" text-anchor="end" textLength="231.0" lengthAdjust="spacing">IO<tspan dy="-1.88">_</tspan><tspan dy="1.88">L11N</tspan><tspan dy="-1.88">_</tspan><tspan dy="1.88">T1U</tspan><tspan dy="-1.88">_</tspan><tspan dy="1.88">N9</tspan><tspan dy="-1.88">_</tspan><tspan dy="1.88">GC</tspan><tspan dy="-1.88">_</tspan><tspan dy="1.88">64</tspan></text><text transform="translate(958.5 895.4) scale(0.9 1)" font-size="15.6" fill="#b81c1c" text-anchor="start" textLength="29.1" lengthAdjust="spacing">AF6</text><line x1="956.3" y1="897.5" x2="990.0" y2="897.5" stroke="#a02a2a" stroke-width="1"/><line x1="990.0" y1="898.0" x2="1191.0" y2="898.0" stroke="#18a018" stroke-width="2"/><rect x="1186.1" y="895.4" width="5.2" height="5.2" fill="none" stroke="#18a018" stroke-width="1"/><text transform="translate(1051.5 895.1) scale(0.78 1)" font-size="14.0" fill="#2b2b2b" text-anchor="start" textLength="130.4" lengthAdjust="spacing">GTH<tspan dy="-1.68">_</tspan><tspan dy="1.68">BCLK</tspan><tspan dy="-1.68">_</tspan><tspan dy="1.68">B1</tspan><tspan dy="-1.68">_</tspan><tspan dy="1.68">N</tspan></text><text transform="translate(945.0 920.6) scale(0.78 1)" font-size="15.7" fill="#0d6a6a" text-anchor="end" textLength="242.1" lengthAdjust="spacing">IO<tspan dy="-1.88">_</tspan><tspan dy="1.88">L12P</tspan><tspan dy="-1.88">_</tspan><tspan dy="1.88">T1U</tspan><tspan dy="-1.88">_</tspan><tspan dy="1.88">N10</tspan><tspan dy="-1.88">_</tspan><tspan dy="1.88">GC</tspan><tspan dy="-1.88">_</tspan><tspan dy="1.88">64</tspan></text><text transform="translate(958.5 912.6) scale(0.9 1)" font-size="15.6" fill="#b81c1c" text-anchor="start" textLength="30.0" lengthAdjust="spacing">AE5</text><line x1="956.3" y1="915.5" x2="990.0" y2="915.5" stroke="#a02a2a" stroke-width="1"/><line x1="990.0" y1="915.0" x2="1191.0" y2="915.0" stroke="#18a018" stroke-width="2"/><rect x="1186.1" y="912.6" width="5.2" height="5.2" fill="none" stroke="#18a018" stroke-width="1"/><text transform="translate(1051.5 912.3) scale(0.78 1)" font-size="14.0" fill="#2b2b2b" text-anchor="start" textLength="129.5" lengthAdjust="spacing">GTH<tspan dy="-1.68">_</tspan><tspan dy="1.68">BCLK</tspan><tspan dy="-1.68">_</tspan><tspan dy="1.68">B2</tspan><tspan dy="-1.68">_</tspan><tspan dy="1.68">P</tspan></text><text transform="translate(945.0 937.9) scale(0.78 1)" font-size="15.7" fill="#0d6a6a" text-anchor="end" textLength="241.8" lengthAdjust="spacing">IO<tspan dy="-1.88">_</tspan><tspan dy="1.88">L12N</tspan><tspan dy="-1.88">_</tspan><tspan dy="1.88">T1U</tspan><tspan dy="-1.88">_</tspan><tspan dy="1.88">N11</tspan><tspan dy="-1.88">_</tspan><tspan dy="1.88">GC</tspan><tspan dy="-1.88">_</tspan><tspan dy="1.88">64</tspan></text><text transform="translate(958.5 929.9) scale(0.9 1)" font-size="15.6" fill="#b81c1c" text-anchor="start" textLength="29.1" lengthAdjust="spacing">AF5</text><line x1="956.3" y1="932.5" x2="990.0" y2="932.5" stroke="#a02a2a" stroke-width="1"/><line x1="990.0" y1="933.0" x2="1191.0" y2="933.0" stroke="#18a018" stroke-width="2"/><rect x="1186.1" y="929.9" width="5.2" height="5.2" fill="none" stroke="#18a018" stroke-width="1"/><text transform="translate(1051.5 929.6) scale(0.78 1)" font-size="14.0" fill="#2b2b2b" text-anchor="start" textLength="130.4" lengthAdjust="spacing">GTH<tspan dy="-1.68">_</tspan><tspan dy="1.68">BCLK</tspan><tspan dy="-1.68">_</tspan><tspan dy="1.68">B2</tspan><tspan dy="-1.68">_</tspan><tspan dy="1.68">N</tspan></text><text transform="translate(945.0 955.2) scale(0.78 1)" font-size="15.7" fill="#0d6a6a" text-anchor="end" textLength="280.9" lengthAdjust="spacing">IO<tspan dy="-1.88">_</tspan><tspan dy="1.88">L13P</tspan><tspan dy="-1.88">_</tspan><tspan dy="1.88">T2L</tspan><tspan dy="-1.88">_</tspan><tspan dy="1.88">N0</tspan><tspan dy="-1.88">_</tspan><tspan dy="1.88">GC</tspan><tspan dy="-1.88">_</tspan><tspan dy="1.88">QBC</tspan><tspan dy="-1.88">_</tspan><tspan dy="1.88">64</tspan></text><text transform="translate(958.5 947.2) scale(0.9 1)" font-size="15.6" fill="#b81c1c" text-anchor="start" textLength="30.9" lengthAdjust="spacing">AD5</text><line x1="956.3" y1="949.5" x2="990.0" y2="949.5" stroke="#a02a2a" stroke-width="1"/><line x1="990.0" y1="950.0" x2="1191.0" y2="950.0" stroke="#18a018" stroke-width="2"/><rect x="1186.1" y="947.2" width="5.2" height="5.2" fill="none" stroke="#18a018" stroke-width="1"/><text transform="translate(1051.5 946.9) scale(0.78 1)" font-size="14.0" fill="#2b2b2b" text-anchor="start" textLength="74.8" lengthAdjust="spacing">VMEF.D13</text><text transform="translate(945.0 972.4) scale(0.78 1)" font-size="15.7" fill="#0d6a6a" text-anchor="end" textLength="281.9" lengthAdjust="spacing">IO<tspan dy="-1.88">_</tspan><tspan dy="1.88">L13N</tspan><tspan dy="-1.88">_</tspan><tspan dy="1.88">T2L</tspan><tspan dy="-1.88">_</tspan><tspan dy="1.88">N1</tspan><tspan dy="-1.88">_</tspan><tspan dy="1.88">GC</tspan><tspan dy="-1.88">_</tspan><tspan dy="1.88">QBC</tspan><tspan dy="-1.88">_</tspan><tspan dy="1.88">64</tspan></text><text transform="translate(958.5 964.4) scale(0.9 1)" font-size="15.6" fill="#b81c1c" text-anchor="start" textLength="30.9" lengthAdjust="spacing">AD4</text><line x1="956.3" y1="967.5" x2="990.0" y2="967.5" stroke="#a02a2a" stroke-width="1"/><line x1="990.0" y1="967.0" x2="1191.0" y2="967.0" stroke="#18a018" stroke-width="2"/><rect x="1186.1" y="964.4" width="5.2" height="5.2" fill="none" stroke="#18a018" stroke-width="1"/><text transform="translate(1051.5 964.1) scale(0.78 1)" font-size="14.0" fill="#2b2b2b" text-anchor="start" textLength="117.4" lengthAdjust="spacing">USERIO<tspan dy="-1.68">_</tspan><tspan dy="1.68">A.IO14</tspan></text><text transform="translate(945.0 989.7) scale(0.78 1)" font-size="15.7" fill="#0d6a6a" text-anchor="end" textLength="228.1" lengthAdjust="spacing">IO<tspan dy="-1.88">_</tspan><tspan dy="1.88">L14P</tspan><tspan dy="-1.88">_</tspan><tspan dy="1.88">T2L</tspan><tspan dy="-1.88">_</tspan><tspan dy="1.88">N2</tspan><tspan dy="-1.88">_</tspan><tspan dy="1.88">GC</tspan><tspan dy="-1.88">_</tspan><tspan dy="1.88">64</tspan></text><text transform="translate(958.5 981.7) scale(0.9 1)" font-size="15.6" fill="#b81c1c" text-anchor="start" textLength="30.9" lengthAdjust="spacing">AC4</text><line x1="956.3" y1="984.5" x2="990.0" y2="984.5" stroke="#a02a2a" stroke-width="1"/><line x1="990.0" y1="984.0" x2="1191.0" y2="984.0" stroke="#18a018" stroke-width="2"/><rect x="1186.1" y="981.7" width="5.2" height="5.2" fill="none" stroke="#18a018" stroke-width="1"/><text transform="translate(1051.5 981.4) scale(0.78 1)" font-size="14.0" fill="#2b2b2b" text-anchor="start" textLength="108.7" lengthAdjust="spacing">USERIO<tspan dy="-1.68">_</tspan><tspan dy="1.68">A.IO6</tspan></text><text transform="translate(945.0 1007.0) scale(0.78 1)" font-size="15.7" fill="#0d6a6a" text-anchor="end" textLength="229.2" lengthAdjust="spacing">IO<tspan dy="-1.88">_</tspan><tspan dy="1.88">L14N</tspan><tspan dy="-1.88">_</tspan><tspan dy="1.88">T2L</tspan><tspan dy="-1.88">_</tspan><tspan dy="1.88">N3</tspan><tspan dy="-1.88">_</tspan><tspan dy="1.88">GC</tspan><tspan dy="-1.88">_</tspan><tspan dy="1.88">64</tspan></text><text transform="translate(958.5 999.0) scale(0.9 1)" font-size="15.6" fill="#b81c1c" text-anchor="start" textLength="30.9" lengthAdjust="spacing">AC3</text><line x1="956.3" y1="1001.5" x2="990.0" y2="1001.5" stroke="#a02a2a" stroke-width="1"/><line x1="990.0" y1="1002.0" x2="1191.0" y2="1002.0" stroke="#18a018" stroke-width="2"/><rect x="1186.1" y="999.0" width="5.2" height="5.2" fill="none" stroke="#18a018" stroke-width="1"/><text transform="translate(1051.5 998.7) scale(0.78 1)" font-size="14.0" fill="#2b2b2b" text-anchor="start" textLength="117.4" lengthAdjust="spacing">USERIO<tspan dy="-1.68">_</tspan><tspan dy="1.68">A.IO12</tspan></text><text transform="translate(945.0 1024.3) scale(0.78 1)" font-size="15.7" fill="#0d6a6a" text-anchor="end" textLength="259.0" lengthAdjust="spacing">IO<tspan dy="-1.88">_</tspan><tspan dy="1.88">L15P</tspan><tspan dy="-1.88">_</tspan><tspan dy="1.88">T2L</tspan><tspan dy="-1.88">_</tspan><tspan dy="1.88">N4</tspan><tspan dy="-1.88">_</tspan><tspan dy="1.88">AD11P</tspan><tspan dy="-1.88">_</tspan><tspan dy="1.88">64</tspan></text><text transform="translate(958.5 1016.3) scale(0.9 1)" font-size="15.6" fill="#b81c1c" text-anchor="start" textLength="30.0" lengthAdjust="spacing">AB4</text><line x1="956.3" y1="1018.5" x2="990.0" y2="1018.5" stroke="#a02a2a" stroke-width="1"/><line x1="990.0" y1="1019.0" x2="1191.0" y2="1019.0" stroke="#18a018" stroke-width="2"/><rect x="1186.1" y="1016.3" width="5.2" height="5.2" fill="none" stroke="#18a018" stroke-width="1"/><text transform="translate(1051.5 1016.0) scale(0.78 1)" font-size="14.0" fill="#2b2b2b" text-anchor="start" textLength="108.7" lengthAdjust="spacing">USERIO<tspan dy="-1.68">_</tspan><tspan dy="1.68">A.IO9</tspan></text><text transform="translate(945.0 1041.5) scale(0.78 1)" font-size="15.7" fill="#0d6a6a" text-anchor="end" textLength="261.1" lengthAdjust="spacing">IO<tspan dy="-1.88">_</tspan><tspan dy="1.88">L15N</tspan><tspan dy="-1.88">_</tspan><tspan dy="1.88">T2L</tspan><tspan dy="-1.88">_</tspan><tspan dy="1.88">N5</tspan><tspan dy="-1.88">_</tspan><tspan dy="1.88">AD11N</tspan><tspan dy="-1.88">_</tspan><tspan dy="1.88">64</tspan></text><text transform="translate(958.5 1033.5) scale(0.9 1)" font-size="15.6" fill="#b81c1c" text-anchor="start" textLength="30.0" lengthAdjust="spacing">AB3</text><line x1="956.3" y1="1036.5" x2="990.0" y2="1036.5" stroke="#a02a2a" stroke-width="1"/><line x1="990.0" y1="1036.0" x2="1191.0" y2="1036.0" stroke="#18a018" stroke-width="2"/><rect x="1186.1" y="1033.5" width="5.2" height="5.2" fill="none" stroke="#18a018" stroke-width="1"/><text transform="translate(1051.5 1033.2) scale(0.78 1)" font-size="14.0" fill="#2b2b2b" text-anchor="start" textLength="117.4" lengthAdjust="spacing">USERIO<tspan dy="-1.68">_</tspan><tspan dy="1.68">A.IO10</tspan></text><text transform="translate(945.0 1058.8) scale(0.78 1)" font-size="15.7" fill="#0d6a6a" text-anchor="end" textLength="305.6" lengthAdjust="spacing">IO<tspan dy="-1.88">_</tspan><tspan dy="1.88">L16P</tspan><tspan dy="-1.88">_</tspan><tspan dy="1.88">T2U</tspan><tspan dy="-1.88">_</tspan><tspan dy="1.88">N6</tspan><tspan dy="-1.88">_</tspan><tspan dy="1.88">QBC</tspan><tspan dy="-1.88">_</tspan><tspan dy="1.88">AD3P</tspan><tspan dy="-1.88">_</tspan><tspan dy="1.88">64</tspan></text><text transform="translate(958.5 1050.8) scale(0.9 1)" font-size="15.6" fill="#b81c1c" text-anchor="start" textLength="30.9" lengthAdjust="spacing">AD2</text><line x1="956.3" y1="1053.5" x2="990.0" y2="1053.5" stroke="#a02a2a" stroke-width="1"/><line x1="990.0" y1="1053.0" x2="1191.0" y2="1053.0" stroke="#18a018" stroke-width="2"/><rect x="1186.1" y="1050.8" width="5.2" height="5.2" fill="none" stroke="#18a018" stroke-width="1"/><text transform="translate(1051.5 1050.5) scale(0.78 1)" font-size="14.0" fill="#2b2b2b" text-anchor="start" textLength="117.4" lengthAdjust="spacing">USERIO<tspan dy="-1.68">_</tspan><tspan dy="1.68">A.IO13</tspan></text><text transform="translate(945.0 1076.1) scale(0.78 1)" font-size="15.7" fill="#0d6a6a" text-anchor="end" textLength="307.7" lengthAdjust="spacing">IO<tspan dy="-1.88">_</tspan><tspan dy="1.88">L16N</tspan><tspan dy="-1.88">_</tspan><tspan dy="1.88">T2U</tspan><tspan dy="-1.88">_</tspan><tspan dy="1.88">N7</tspan><tspan dy="-1.88">_</tspan><tspan dy="1.88">QBC</tspan><tspan dy="-1.88">_</tspan><tspan dy="1.88">AD3N</tspan><tspan dy="-1.88">_</tspan><tspan dy="1.88">64</tspan></text><text transform="translate(958.5 1068.1) scale(0.9 1)" font-size="15.6" fill="#b81c1c" text-anchor="start" textLength="30.0" lengthAdjust="spacing">AE3</text><line x1="956.3" y1="1070.5" x2="990.0" y2="1070.5" stroke="#a02a2a" stroke-width="1"/><line x1="990.0" y1="1071.0" x2="1191.0" y2="1071.0" stroke="#18a018" stroke-width="2"/><rect x="1186.1" y="1068.1" width="5.2" height="5.2" fill="none" stroke="#18a018" stroke-width="1"/><text transform="translate(1051.5 1067.8) scale(0.78 1)" font-size="14.0" fill="#2b2b2b" text-anchor="start" textLength="116.2" lengthAdjust="spacing">USERIO<tspan dy="-1.68">_</tspan><tspan dy="1.68">A.IO11</tspan></text><text transform="translate(1405.5 515.6) scale(0.78 1)" font-size="14.0" fill="#20208e" text-anchor="start" textLength="53.9" lengthAdjust="spacing">{VMEF}</text><line x1="1404.0" y1="518.2" x2="1465.4" y2="518.2" stroke="#1d1d8f" stroke-width="2.3"/><line x1="1404.0" y1="518.2" x2="1404.0" y2="1060.0" stroke="#1d1d8f" stroke-width="2.3"/><path d="M1465.4 518.2 L1469.9 513.7 L1474.4 518.2 L1469.9 522.7 Z" fill="none" stroke="#8f7326" stroke-width="1.3"/><text transform="translate(1476.0 523.1) scale(0.78 1)" font-size="14.0" fill="#20208e" text-anchor="start" textLength="53.9" lengthAdjust="spacing">{VMEF}</text><rect x="1283" y="530" width="55.6" height="12.5" rx="3" fill="#bfe2f6"/><line x1="1282.3" y1="544.0" x2="1386.8" y2="544.0" stroke="#18a018" stroke-width="2"/><line x1="1386.8" y1="544.5" x2="1404.0" y2="561.8" stroke="#18a018" stroke-width="1.1"/><text transform="translate(1284.6 541.6) scale(0.78 1)" font-size="14.0" fill="#2b2b2b" text-anchor="start" textLength="66.1" lengthAdjust="spacing">VMEF.D0</text><line x1="1282.3" y1="562.0" x2="1386.8" y2="562.0" stroke="#18a018" stroke-width="2"/><line x1="1386.8" y1="561.8" x2="1404.0" y2="579.0" stroke="#18a018" stroke-width="1.1"/><text transform="translate(1284.6 558.9) scale(0.78 1)" font-size="14.0" fill="#2b2b2b" text-anchor="start" textLength="66.1" lengthAdjust="spacing">VMEF.D1</text><line x1="1282.3" y1="579.0" x2="1386.8" y2="579.0" stroke="#18a018" stroke-width="2"/><line x1="1386.8" y1="579.0" x2="1404.0" y2="596.3" stroke="#18a018" stroke-width="1.1"/><text transform="translate(1284.6 576.1) scale(0.78 1)" font-size="14.0" fill="#2b2b2b" text-anchor="start" textLength="66.1" lengthAdjust="spacing">VMEF.D2</text><line x1="1282.3" y1="596.0" x2="1386.8" y2="596.0" stroke="#18a018" stroke-width="2"/><line x1="1386.8" y1="596.3" x2="1404.0" y2="613.6" stroke="#18a018" stroke-width="1.1"/><text transform="translate(1284.6 593.4) scale(0.78 1)" font-size="14.0" fill="#2b2b2b" text-anchor="start" textLength="66.1" lengthAdjust="spacing">VMEF.D3</text><line x1="1282.3" y1="614.0" x2="1386.8" y2="614.0" stroke="#18a018" stroke-width="2"/><line x1="1386.8" y1="613.6" x2="1404.0" y2="630.9" stroke="#18a018" stroke-width="1.1"/><text transform="translate(1284.6 610.7) scale(0.78 1)" font-size="14.0" fill="#2b2b2b" text-anchor="start" textLength="66.1" lengthAdjust="spacing">VMEF.D4</text><line x1="1282.3" y1="631.0" x2="1386.8" y2="631.0" stroke="#18a018" stroke-width="2"/><line x1="1386.8" y1="630.9" x2="1404.0" y2="648.1" stroke="#18a018" stroke-width="1.1"/><text transform="translate(1284.6 628.0) scale(0.78 1)" font-size="14.0" fill="#2b2b2b" text-anchor="start" textLength="66.1" lengthAdjust="spacing">VMEF.D5</text><line x1="1282.3" y1="648.0" x2="1386.8" y2="648.0" stroke="#18a018" stroke-width="2"/><line x1="1386.8" y1="648.1" x2="1404.0" y2="665.4" stroke="#18a018" stroke-width="1.1"/><text transform="translate(1284.6 645.2) scale(0.78 1)" font-size="14.0" fill="#2b2b2b" text-anchor="start" textLength="66.1" lengthAdjust="spacing">VMEF.D6</text><line x1="1282.3" y1="665.0" x2="1386.8" y2="665.0" stroke="#18a018" stroke-width="2"/><line x1="1386.8" y1="665.4" x2="1404.0" y2="682.7" stroke="#18a018" stroke-width="1.1"/><text transform="translate(1284.6 662.5) scale(0.78 1)" font-size="14.0" fill="#2b2b2b" text-anchor="start" textLength="66.1" lengthAdjust="spacing">VMEF.D7</text><line x1="1282.3" y1="683.0" x2="1386.8" y2="683.0" stroke="#18a018" stroke-width="2"/><line x1="1386.8" y1="682.7" x2="1404.0" y2="699.9" stroke="#18a018" stroke-width="1.1"/><text transform="translate(1284.6 679.8) scale(0.78 1)" font-size="14.0" fill="#2b2b2b" text-anchor="start" textLength="66.1" lengthAdjust="spacing">VMEF.D8</text><line x1="1282.3" y1="700.0" x2="1386.8" y2="700.0" stroke="#18a018" stroke-width="2"/><line x1="1386.8" y1="699.9" x2="1404.0" y2="717.2" stroke="#18a018" stroke-width="1.1"/><text transform="translate(1284.6 697.0) scale(0.78 1)" font-size="14.0" fill="#2b2b2b" text-anchor="start" textLength="66.1" lengthAdjust="spacing">VMEF.D9</text><line x1="1282.3" y1="717.0" x2="1386.8" y2="717.0" stroke="#18a018" stroke-width="2"/><line x1="1386.8" y1="717.2" x2="1404.0" y2="734.5" stroke="#18a018" stroke-width="1.1"/><text transform="translate(1284.6 714.3) scale(0.78 1)" font-size="14.0" fill="#2b2b2b" text-anchor="start" textLength="74.8" lengthAdjust="spacing">VMEF.D10</text><line x1="1282.3" y1="734.0" x2="1386.8" y2="734.0" stroke="#18a018" stroke-width="2"/><line x1="1386.8" y1="734.5" x2="1404.0" y2="751.7" stroke="#18a018" stroke-width="1.1"/><text transform="translate(1284.6 731.6) scale(0.78 1)" font-size="14.0" fill="#2b2b2b" text-anchor="start" textLength="73.6" lengthAdjust="spacing">VMEF.D11</text><line x1="1282.3" y1="752.0" x2="1386.8" y2="752.0" stroke="#18a018" stroke-width="2"/><line x1="1386.8" y1="751.7" x2="1404.0" y2="769.0" stroke="#18a018" stroke-width="1.1"/><text transform="translate(1284.6 748.8) scale(0.78 1)" font-size="14.0" fill="#2b2b2b" text-anchor="start" textLength="74.8" lengthAdjust="spacing">VMEF.D12</text><line x1="1282.3" y1="769.0" x2="1386.8" y2="769.0" stroke="#18a018" stroke-width="2"/><line x1="1386.8" y1="769.0" x2="1404.0" y2="786.3" stroke="#18a018" stroke-width="1.1"/><text transform="translate(1284.6 766.1) scale(0.78 1)" font-size="14.0" fill="#2b2b2b" text-anchor="start" textLength="74.8" lengthAdjust="spacing">VMEF.D13</text><line x1="1282.3" y1="786.0" x2="1386.8" y2="786.0" stroke="#18a018" stroke-width="2"/><line x1="1386.8" y1="786.3" x2="1404.0" y2="803.5" stroke="#18a018" stroke-width="1.1"/><text transform="translate(1284.6 783.4) scale(0.78 1)" font-size="14.0" fill="#2b2b2b" text-anchor="start" textLength="74.8" lengthAdjust="spacing">VMEF.D14</text><line x1="1282.3" y1="804.0" x2="1386.8" y2="804.0" stroke="#18a018" stroke-width="2"/><line x1="1386.8" y1="803.5" x2="1404.0" y2="820.8" stroke="#18a018" stroke-width="1.1"/><text transform="translate(1284.6 800.6) scale(0.78 1)" font-size="14.0" fill="#2b2b2b" text-anchor="start" textLength="74.8" lengthAdjust="spacing">VMEF.D15</text><line x1="1282.3" y1="821.0" x2="1386.8" y2="821.0" stroke="#18a018" stroke-width="2"/><line x1="1386.8" y1="820.8" x2="1404.0" y2="838.1" stroke="#18a018" stroke-width="1.1"/><text transform="translate(1284.6 817.9) scale(0.78 1)" font-size="14.0" fill="#2b2b2b" text-anchor="start" textLength="74.8" lengthAdjust="spacing">VMEF.D16</text><line x1="1282.3" y1="838.0" x2="1386.8" y2="838.0" stroke="#18a018" stroke-width="2"/><line x1="1386.8" y1="838.1" x2="1404.0" y2="855.4" stroke="#18a018" stroke-width="1.1"/><text transform="translate(1284.6 835.2) scale(0.78 1)" font-size="14.0" fill="#2b2b2b" text-anchor="start" textLength="74.8" lengthAdjust="spacing">VMEF.D17</text><line x1="1282.3" y1="855.0" x2="1386.8" y2="855.0" stroke="#18a018" stroke-width="2"/><line x1="1386.8" y1="855.4" x2="1404.0" y2="872.6" stroke="#18a018" stroke-width="1.1"/><text transform="translate(1284.6 852.5) scale(0.78 1)" font-size="14.0" fill="#2b2b2b" text-anchor="start" textLength="74.8" lengthAdjust="spacing">VMEF.D18</text><line x1="1282.3" y1="873.0" x2="1386.8" y2="873.0" stroke="#18a018" stroke-width="2"/><line x1="1386.8" y1="872.6" x2="1404.0" y2="889.9" stroke="#18a018" stroke-width="1.1"/><text transform="translate(1284.6 869.7) scale(0.78 1)" font-size="14.0" fill="#2b2b2b" text-anchor="start" textLength="74.8" lengthAdjust="spacing">VMEF.D19</text><line x1="1282.3" y1="890.0" x2="1386.8" y2="890.0" stroke="#18a018" stroke-width="2"/><line x1="1386.8" y1="889.9" x2="1404.0" y2="907.2" stroke="#18a018" stroke-width="1.1"/><text transform="translate(1284.6 887.0) scale(0.78 1)" font-size="14.0" fill="#2b2b2b" text-anchor="start" textLength="74.8" lengthAdjust="spacing">VMEF.D20</text><line x1="1282.3" y1="907.0" x2="1386.8" y2="907.0" stroke="#18a018" stroke-width="2"/><line x1="1386.8" y1="907.2" x2="1404.0" y2="924.4" stroke="#18a018" stroke-width="1.1"/><text transform="translate(1284.6 904.3) scale(0.78 1)" font-size="14.0" fill="#2b2b2b" text-anchor="start" textLength="74.8" lengthAdjust="spacing">VMEF.D21</text><line x1="1282.3" y1="924.0" x2="1386.8" y2="924.0" stroke="#18a018" stroke-width="2"/><line x1="1386.8" y1="924.4" x2="1404.0" y2="941.7" stroke="#18a018" stroke-width="1.1"/><text transform="translate(1284.6 921.5) scale(0.78 1)" font-size="14.0" fill="#2b2b2b" text-anchor="start" textLength="74.8" lengthAdjust="spacing">VMEF.D22</text><line x1="1282.3" y1="942.0" x2="1386.8" y2="942.0" stroke="#18a018" stroke-width="2"/><line x1="1386.8" y1="941.7" x2="1404.0" y2="959.0" stroke="#18a018" stroke-width="1.1"/><text transform="translate(1284.6 938.8) scale(0.78 1)" font-size="14.0" fill="#2b2b2b" text-anchor="start" textLength="74.8" lengthAdjust="spacing">VMEF.D23</text><line x1="1282.3" y1="959.0" x2="1386.8" y2="959.0" stroke="#18a018" stroke-width="2"/><line x1="1386.8" y1="959.0" x2="1404.0" y2="976.2" stroke="#18a018" stroke-width="1.1"/><text transform="translate(1284.6 956.1) scale(0.78 1)" font-size="14.0" fill="#2b2b2b" text-anchor="start" textLength="74.8" lengthAdjust="spacing">VMEF.D24</text><line x1="1282.3" y1="976.0" x2="1386.8" y2="976.0" stroke="#18a018" stroke-width="2"/><line x1="1386.8" y1="976.2" x2="1404.0" y2="993.5" stroke="#18a018" stroke-width="1.1"/><text transform="translate(1284.6 973.4) scale(0.78 1)" font-size="14.0" fill="#2b2b2b" text-anchor="start" textLength="74.8" lengthAdjust="spacing">VMEF.D25</text><line x1="1282.3" y1="994.0" x2="1386.8" y2="994.0" stroke="#18a018" stroke-width="2"/><line x1="1386.8" y1="993.5" x2="1404.0" y2="1010.8" stroke="#18a018" stroke-width="1.1"/><text transform="translate(1284.6 990.6) scale(0.78 1)" font-size="14.0" fill="#2b2b2b" text-anchor="start" textLength="74.8" lengthAdjust="spacing">VMEF.D26</text><line x1="1282.3" y1="1011.0" x2="1386.8" y2="1011.0" stroke="#18a018" stroke-width="2"/><line x1="1386.8" y1="1010.8" x2="1404.0" y2="1028.1" stroke="#18a018" stroke-width="1.1"/><text transform="translate(1284.6 1007.9) scale(0.78 1)" font-size="14.0" fill="#2b2b2b" text-anchor="start" textLength="74.8" lengthAdjust="spacing">VMEF.D27</text><line x1="1282.3" y1="1028.0" x2="1386.8" y2="1028.0" stroke="#18a018" stroke-width="2"/><line x1="1386.8" y1="1028.1" x2="1404.0" y2="1045.3" stroke="#18a018" stroke-width="1.1"/><text transform="translate(1284.6 1025.2) scale(0.78 1)" font-size="14.0" fill="#2b2b2b" text-anchor="start" textLength="74.8" lengthAdjust="spacing">VMEF.D28</text><line x1="1282.3" y1="1045.0" x2="1386.8" y2="1045.0" stroke="#18a018" stroke-width="2"/><line x1="1386.8" y1="1045.3" x2="1404.0" y2="1062.6" stroke="#18a018" stroke-width="1.1"/><text transform="translate(1284.6 1042.4) scale(0.78 1)" font-size="14.0" fill="#2b2b2b" text-anchor="start" textLength="74.8" lengthAdjust="spacing">VMEF.D29</text><line x1="1282.3" y1="1063.0" x2="1386.8" y2="1063.0" stroke="#18a018" stroke-width="2"/><line x1="1386.8" y1="1062.6" x2="1404.0" y2="1079.9" stroke="#18a018" stroke-width="1.1"/><text transform="translate(1284.6 1059.7) scale(0.78 1)" font-size="14.0" fill="#2b2b2b" text-anchor="start" textLength="74.8" lengthAdjust="spacing">VMEF.D30</text><path d="M1280.5 544.5 h6 M1283.5 541.5 v6" stroke="#2060e0" stroke-width="1.2"/><text transform="translate(1543.0 488.9) scale(0.78 1)" font-size="13.4" fill="#0d6a6a" text-anchor="start" textLength="45.9" lengthAdjust="spacing">IC14F</text><text transform="translate(1543.0 505.3) scale(0.78 1)" font-size="13.4" fill="#0d6a6a" text-anchor="start" textLength="181.8" lengthAdjust="spacing">XCZU4CG-1SFVC7B4E</text><rect x="1542" y="509" width="362.4" height="700" fill="#ffffc2" stroke="#a02a2a" stroke-width="1.2"/><rect x="1895.8" y="518.1" width="8.6" height="600" fill="#840000"/><text transform="translate(1894.0 532.9) scale(0.78 1)" font-size="15.7" fill="#0d6a6a" text-anchor="end" textLength="229.2" lengthAdjust="spacing">IO<tspan dy="-1.88">_</tspan><tspan dy="1.88">L1P</tspan><tspan dy="-1.88">_</tspan><tspan dy="1.88">T0L</tspan><tspan dy="-1.88">_</tspan><tspan dy="1.88">N0</tspan><tspan dy="-1.88">_</tspan><tspan dy="1.88">DBC</tspan><tspan dy="-1.88">_</tspan><tspan dy="1.88">65</tspan></text><text transform="translate(1912.0 524.9) scale(0.9 1)" font-size="15.6" fill="#b81c1c" text-anchor="start" textLength="23.8" lengthAdjust="spacing">W8</text><line x1="1904.4" y1="527.5" x2="1938.5" y2="527.5" stroke="#a02a2a" stroke-width="1"/><line x1="1938.5" y1="528.0" x2="2025.0" y2="528.0" stroke="#18a018" stroke-width="2"/><text transform="translate(2009.0 524.6) scale(0.78 1)" font-size="14.0" fill="#2b2b2b" text-anchor="start" textLength="21.7" lengthAdjust="spacing">US</text><text transform="translate(1894.0 550.2) scale(0.78 1)" font-size="15.7" fill="#0d6a6a" text-anchor="end" textLength="230.3" lengthAdjust="spacing">IO<tspan dy="-1.88">_</tspan><tspan dy="1.88">L1N</tspan><tspan dy="-1.88">_</tspan><tspan dy="1.88">T0L</tspan><tspan dy="-1.88">_</tspan><tspan dy="1.88">N1</tspan><tspan dy="-1.88">_</tspan><tspan dy="1.88">DBC</tspan><tspan dy="-1.88">_</tspan><tspan dy="1.88">65</tspan></text><text transform="translate(1912.0 542.2) scale(0.9 1)" font-size="15.6" fill="#b81c1c" text-anchor="start" textLength="19.4" lengthAdjust="spacing">Y8</text><line x1="1904.4" y1="544.5" x2="1938.5" y2="544.5" stroke="#a02a2a" stroke-width="1"/><line x1="1938.5" y1="545.0" x2="2025.0" y2="545.0" stroke="#18a018" stroke-width="2"/><text transform="translate(2009.0 541.9) scale(0.78 1)" font-size="14.0" fill="#2b2b2b" text-anchor="start" textLength="21.7" lengthAdjust="spacing">US</text><text transform="translate(1894.0 567.4) scale(0.78 1)" font-size="15.7" fill="#0d6a6a" text-anchor="end" textLength="177.6" lengthAdjust="spacing">IO<tspan dy="-1.88">_</tspan><tspan dy="1.88">L2P</tspan><tspan dy="-1.88">_</tspan><tspan dy="1.88">T0L</tspan><tspan dy="-1.88">_</tspan><tspan dy="1.88">N2</tspan><tspan dy="-1.88">_</tspan><tspan dy="1.88">65</tspan></text><text transform="translate(1912.0 559.4) scale(0.9 1)" font-size="15.6" fill="#b81c1c" text-anchor="start" textLength="20.3" lengthAdjust="spacing">U9</text><line x1="1904.4" y1="562.5" x2="1938.5" y2="562.5" stroke="#a02a2a" stroke-width="1"/><line x1="1938.5" y1="562.0" x2="2025.0" y2="562.0" stroke="#18a018" stroke-width="2"/><text transform="translate(2009.0 559.1) scale(0.78 1)" font-size="14.0" fill="#2b2b2b" text-anchor="start" textLength="21.7" lengthAdjust="spacing">HP</text><path d="M1935.0 558.0 L1943.0 566.0 M1935.0 566.0 L1943.0 558.0" stroke="#2525a0" stroke-width="1.3"/><text transform="translate(1894.0 584.7) scale(0.78 1)" font-size="15.7" fill="#0d6a6a" text-anchor="end" textLength="178.6" lengthAdjust="spacing">IO<tspan dy="-1.88">_</tspan><tspan dy="1.88">L2N</tspan><tspan dy="-1.88">_</tspan><tspan dy="1.88">T0L</tspan><tspan dy="-1.88">_</tspan><tspan dy="1.88">N3</tspan><tspan dy="-1.88">_</tspan><tspan dy="1.88">65</tspan></text><text transform="translate(1912.0 576.7) scale(0.9 1)" font-size="15.6" fill="#b81c1c" text-anchor="start" textLength="19.4" lengthAdjust="spacing">V9</text><line x1="1904.4" y1="579.5" x2="1938.5" y2="579.5" stroke="#a02a2a" stroke-width="1"/><line x1="1938.5" y1="579.0" x2="2025.0" y2="579.0" stroke="#18a018" stroke-width="2"/><text transform="translate(2009.0 576.4) scale(0.78 1)" font-size="14.0" fill="#2b2b2b" text-anchor="start" textLength="18.3" lengthAdjust="spacing">F<tspan dy="-1.68">_</tspan><tspan dy="1.68"></tspan></text><text transform="translate(1894.0 602.0) scale(0.78 1)" font-size="15.7" fill="#0d6a6a" text-anchor="end" textLength="249.7" lengthAdjust="spacing">IO<tspan dy="-1.88">_</tspan><tspan dy="1.88">L3P</tspan><tspan dy="-1.88">_</tspan><tspan dy="1.88">T0L</tspan><tspan dy="-1.88">_</tspan><tspan dy="1.88">N4</tspan><tspan dy="-1.88">_</tspan><tspan dy="1.88">AD15P</tspan><tspan dy="-1.88">_</tspan><tspan dy="1.88">65</tspan></text><text transform="translate(1912.0 594.0) scale(0.9 1)" font-size="15.6" fill="#b81c1c" text-anchor="start" textLength="20.3" lengthAdjust="spacing">U8</text><line x1="1904.4" y1="596.5" x2="1938.5" y2="596.5" stroke="#a02a2a" stroke-width="1"/><line x1="1938.5" y1="597.0" x2="2025.0" y2="597.0" stroke="#18a018" stroke-width="2"/><text transform="translate(2009.0 593.7) scale(0.78 1)" font-size="14.0" fill="#2b2b2b" text-anchor="start" textLength="21.7" lengthAdjust="spacing">US</text><text transform="translate(1894.0 619.2) scale(0.78 1)" font-size="15.7" fill="#0d6a6a" text-anchor="end" textLength="251.8" lengthAdjust="spacing">IO<tspan dy="-1.88">_</tspan><tspan dy="1.88">L3N</tspan><tspan dy="-1.88">_</tspan><tspan dy="1.88">T0L</tspan><tspan dy="-1.88">_</tspan><tspan dy="1.88">N5</tspan><tspan dy="-1.88">_</tspan><tspan dy="1.88">AD15N</tspan><tspan dy="-1.88">_</tspan><tspan dy="1.88">65</tspan></text><text transform="translate(1912.0 611.2) scale(0.9 1)" font-size="15.6" fill="#b81c1c" text-anchor="start" textLength="19.4" lengthAdjust="spacing">V8</text><line x1="1904.4" y1="613.5" x2="1938.5" y2="613.5" stroke="#a02a2a" stroke-width="1"/><line x1="1938.5" y1="614.0" x2="2025.0" y2="614.0" stroke="#18a018" stroke-width="2"/><text transform="translate(2009.0 611.0) scale(0.78 1)" font-size="14.0" fill="#2b2b2b" text-anchor="start" textLength="21.7" lengthAdjust="spacing">US</text><text transform="translate(1894.0 636.5) scale(0.78 1)" font-size="15.7" fill="#0d6a6a" text-anchor="end" textLength="408.5" lengthAdjust="spacing">IO<tspan dy="-1.88">_</tspan><tspan dy="1.88">L4P</tspan><tspan dy="-1.88">_</tspan><tspan dy="1.88">T0U</tspan><tspan dy="-1.88">_</tspan><tspan dy="1.88">N6</tspan><tspan dy="-1.88">_</tspan><tspan dy="1.88">DBC</tspan><tspan dy="-1.88">_</tspan><tspan dy="1.88">AD7P</tspan><tspan dy="-1.88">_</tspan><tspan dy="1.88">SMBALERT</tspan><tspan dy="-1.88">_</tspan><tspan dy="1.88">65</tspan></text><text transform="translate(1912.0 628.5) scale(0.9 1)" font-size="15.6" fill="#b81c1c" text-anchor="start" textLength="20.3" lengthAdjust="spacing">R8</text><line x1="1904.4" y1="631.5" x2="1938.5" y2="631.5" stroke="#a02a2a" stroke-width="1"/><line x1="1938.5" y1="631.0" x2="2025.0" y2="631.0" stroke="#18a018" stroke-width="2"/><text transform="translate(2009.0 628.2) scale(0.78 1)" font-size="14.0" fill="#2b2b2b" text-anchor="start" textLength="21.7" lengthAdjust="spacing">HP</text><path d="M1935.0 627.1 L1943.0 635.1 M1935.0 635.1 L1943.0 627.1" stroke="#2525a0" stroke-width="1.3"/><text transform="translate(1894.0 653.8) scale(0.78 1)" font-size="15.7" fill="#0d6a6a" text-anchor="end" textLength="295.9" lengthAdjust="spacing">IO<tspan dy="-1.88">_</tspan><tspan dy="1.88">L4N</tspan><tspan dy="-1.88">_</tspan><tspan dy="1.88">T0U</tspan><tspan dy="-1.88">_</tspan><tspan dy="1.88">N7</tspan><tspan dy="-1.88">_</tspan><tspan dy="1.88">DBC</tspan><tspan dy="-1.88">_</tspan><tspan dy="1.88">AD7N</tspan><tspan dy="-1.88">_</tspan><tspan dy="1.88">65</tspan></text><text transform="translate(1912.0 645.8) scale(0.9 1)" font-size="15.6" fill="#b81c1c" text-anchor="start" textLength="18.5" lengthAdjust="spacing">T8</text><line x1="1904.4" y1="648.5" x2="1938.5" y2="648.5" stroke="#a02a2a" stroke-width="1"/><line x1="1938.5" y1="648.0" x2="2025.0" y2="648.0" stroke="#18a018" stroke-width="2"/><text transform="translate(2009.0 645.5) scale(0.78 1)" font-size="14.0" fill="#2b2b2b" text-anchor="start" textLength="21.7" lengthAdjust="spacing">HP</text><path d="M1935.0 644.4 L1943.0 652.4 M1935.0 652.4 L1943.0 644.4" stroke="#2525a0" stroke-width="1.3"/><text transform="translate(1894.0 671.1) scale(0.78 1)" font-size="15.7" fill="#0d6a6a" text-anchor="end" textLength="252.9" lengthAdjust="spacing">IO<tspan dy="-1.88">_</tspan><tspan dy="1.88">L5P</tspan><tspan dy="-1.88">_</tspan><tspan dy="1.88">T0U</tspan><tspan dy="-1.88">_</tspan><tspan dy="1.88">N8</tspan><tspan dy="-1.88">_</tspan><tspan dy="1.88">AD14P</tspan><tspan dy="-1.88">_</tspan><tspan dy="1.88">65</tspan></text><text transform="translate(1912.0 663.1) scale(0.9 1)" font-size="15.6" fill="#b81c1c" text-anchor="start" textLength="20.3" lengthAdjust="spacing">R7</text><line x1="1904.4" y1="665.5" x2="1938.5" y2="665.5" stroke="#a02a2a" stroke-width="1"/><line x1="1938.5" y1="666.0" x2="2025.0" y2="666.0" stroke="#18a018" stroke-width="2"/><text transform="translate(2009.0 662.8) scale(0.78 1)" font-size="14.0" fill="#2b2b2b" text-anchor="start" textLength="21.7" lengthAdjust="spacing">US</text><text transform="translate(1894.0 688.3) scale(0.78 1)" font-size="15.7" fill="#0d6a6a" text-anchor="end" textLength="255.0" lengthAdjust="spacing">IO<tspan dy="-1.88">_</tspan><tspan dy="1.88">L5N</tspan><tspan dy="-1.88">_</tspan><tspan dy="1.88">T0U</tspan><tspan dy="-1.88">_</tspan><tspan dy="1.88">N9</tspan><tspan dy="-1.88">_</tspan><tspan dy="1.88">AD14N</tspan><tspan dy="-1.88">_</tspan><tspan dy="1.88">65</tspan></text><text transform="translate(1912.0 680.3) scale(0.9 1)" font-size="15.6" fill="#b81c1c" text-anchor="start" textLength="18.5" lengthAdjust="spacing">T7</text><line x1="1904.4" y1="682.5" x2="1938.5" y2="682.5" stroke="#a02a2a" stroke-width="1"/><line x1="1938.5" y1="683.0" x2="2025.0" y2="683.0" stroke="#18a018" stroke-width="2"/><text transform="translate(2009.0 680.0) scale(0.78 1)" font-size="14.0" fill="#2b2b2b" text-anchor="start" textLength="21.7" lengthAdjust="spacing">US</text><text transform="translate(1894.0 705.6) scale(0.78 1)" font-size="15.7" fill="#0d6a6a" text-anchor="end" textLength="252.9" lengthAdjust="spacing">IO<tspan dy="-1.88">_</tspan><tspan dy="1.88">L6P</tspan><tspan dy="-1.88">_</tspan><tspan dy="1.88">T0U</tspan><tspan dy="-1.88">_</tspan><tspan dy="1.88">N10</tspan><tspan dy="-1.88">_</tspan><tspan dy="1.88">AD6P</tspan><tspan dy="-1.88">_</tspan><tspan dy="1.88">65</tspan></text><text transform="translate(1912.0 697.6) scale(0.9 1)" font-size="15.6" fill="#b81c1c" text-anchor="start" textLength="20.3" lengthAdjust="spacing">R6</text><line x1="1904.4" y1="700.5" x2="1938.5" y2="700.5" stroke="#a02a2a" stroke-width="1"/><line x1="1938.5" y1="700.0" x2="2025.0" y2="700.0" stroke="#18a018" stroke-width="2"/><text transform="translate(2009.0 697.3) scale(0.78 1)" font-size="14.0" fill="#2b2b2b" text-anchor="start" textLength="21.7" lengthAdjust="spacing">US</text><text transform="translate(1894.0 722.9) scale(0.78 1)" font-size="15.7" fill="#0d6a6a" text-anchor="end" textLength="253.6" lengthAdjust="spacing">IO<tspan dy="-1.88">_</tspan><tspan dy="1.88">L6N</tspan><tspan dy="-1.88">_</tspan><tspan dy="1.88">T0U</tspan><tspan dy="-1.88">_</tspan><tspan dy="1.88">N11</tspan><tspan dy="-1.88">_</tspan><tspan dy="1.88">AD6N</tspan><tspan dy="-1.88">_</tspan><tspan dy="1.88">65</tspan></text><text transform="translate(1912.0 714.9) scale(0.9 1)" font-size="15.6" fill="#b81c1c" text-anchor="start" textLength="18.5" lengthAdjust="spacing">T6</text><line x1="1904.4" y1="717.5" x2="1938.5" y2="717.5" stroke="#a02a2a" stroke-width="1"/><line x1="1938.5" y1="717.0" x2="2025.0" y2="717.0" stroke="#18a018" stroke-width="2"/><text transform="translate(2009.0 714.6) scale(0.78 1)" font-size="14.0" fill="#2b2b2b" text-anchor="start" textLength="21.7" lengthAdjust="spacing">US</text><text transform="translate(1894.0 740.1) scale(0.78 1)" font-size="15.7" fill="#0d6a6a" text-anchor="end" textLength="302.4" lengthAdjust="spacing">IO<tspan dy="-1.88">_</tspan><tspan dy="1.88">L7P</tspan><tspan dy="-1.88">_</tspan><tspan dy="1.88">T1L</tspan><tspan dy="-1.88">_</tspan><tspan dy="1.88">N0</tspan><tspan dy="-1.88">_</tspan><tspan dy="1.88">QBC</tspan><tspan dy="-1.88">_</tspan><tspan dy="1.88">AD13P</tspan><tspan dy="-1.88">_</tspan><tspan dy="1.88">65</tspan></text><text transform="translate(1912.0 732.1) scale(0.9 1)" font-size="15.6" fill="#b81c1c" text-anchor="start" textLength="17.7" lengthAdjust="spacing">L1</text><line x1="1904.4" y1="734.5" x2="1938.5" y2="734.5" stroke="#a02a2a" stroke-width="1"/><line x1="1938.5" y1="735.0" x2="2025.0" y2="735.0" stroke="#18a018" stroke-width="2"/><text transform="translate(2009.0 731.8) scale(0.78 1)" font-size="14.0" fill="#2b2b2b" text-anchor="start" textLength="18.3" lengthAdjust="spacing">F<tspan dy="-1.68">_</tspan><tspan dy="1.68"></tspan></text><text transform="translate(1894.0 757.4) scale(0.78 1)" font-size="15.7" fill="#0d6a6a" text-anchor="end" textLength="304.5" lengthAdjust="spacing">IO<tspan dy="-1.88">_</tspan><tspan dy="1.88">L7N</tspan><tspan dy="-1.88">_</tspan><tspan dy="1.88">T1L</tspan><tspan dy="-1.88">_</tspan><tspan dy="1.88">N1</tspan><tspan dy="-1.88">_</tspan><tspan dy="1.88">QBC</tspan><tspan dy="-1.88">_</tspan><tspan dy="1.88">AD13N</tspan><tspan dy="-1.88">_</tspan><tspan dy="1.88">65</tspan></text><text transform="translate(1912.0 749.4) scale(0.9 1)" font-size="15.6" fill="#b81c1c" text-anchor="start" textLength="19.4" lengthAdjust="spacing">K1</text><line x1="1904.4" y1="752.5" x2="1938.5" y2="752.5" stroke="#a02a2a" stroke-width="1"/><line x1="1938.5" y1="752.0" x2="2025.0" y2="752.0" stroke="#18a018" stroke-width="2"/><text transform="translate(2009.0 749.1) scale(0.78 1)" font-size="14.0" fill="#2b2b2b" text-anchor="start" textLength="18.3" lengthAdjust="spacing">F<tspan dy="-1.68">_</tspan><tspan dy="1.68"></tspan></text><text transform="translate(1894.0 774.7) scale(0.78 1)" font-size="15.7" fill="#0d6a6a" text-anchor="end" textLength="238.9" lengthAdjust="spacing">IO<tspan dy="-1.88">_</tspan><tspan dy="1.88">L8P</tspan><tspan dy="-1.88">_</tspan><tspan dy="1.88">T1L</tspan><tspan dy="-1.88">_</tspan><tspan dy="1.88">N2</tspan><tspan dy="-1.88">_</tspan><tspan dy="1.88">AD5P</tspan><tspan dy="-1.88">_</tspan><tspan dy="1.88">65</tspan></text><text transform="translate(1912.0 766.7) scale(0.9 1)" font-size="15.6" fill="#b81c1c" text-anchor="start" textLength="16.8" lengthAdjust="spacing">J1</text><line x1="1904.4" y1="769.5" x2="1938.5" y2="769.5" stroke="#a02a2a" stroke-width="1"/><line x1="1938.5" y1="769.0" x2="2025.0" y2="769.0" stroke="#18a018" stroke-width="2"/><text transform="translate(2009.0 766.4) scale(0.78 1)" font-size="14.0" fill="#2b2b2b" text-anchor="start" textLength="18.3" lengthAdjust="spacing">F<tspan dy="-1.68">_</tspan><tspan dy="1.68"></tspan></text><text transform="translate(1894.0 791.9) scale(0.78 1)" font-size="15.7" fill="#0d6a6a" text-anchor="end" textLength="241.0" lengthAdjust="spacing">IO<tspan dy="-1.88">_</tspan><tspan dy="1.88">L8N</tspan><tspan dy="-1.88">_</tspan><tspan dy="1.88">T1L</tspan><tspan dy="-1.88">_</tspan><tspan dy="1.88">N3</tspan><tspan dy="-1.88">_</tspan><tspan dy="1.88">AD5N</tspan><tspan dy="-1.88">_</tspan><tspan dy="1.88">65</tspan></text><text transform="translate(1912.0 783.9) scale(0.9 1)" font-size="15.6" fill="#b81c1c" text-anchor="start" textLength="20.3" lengthAdjust="spacing">H1</text><line x1="1904.4" y1="786.5" x2="1938.5" y2="786.5" stroke="#a02a2a" stroke-width="1"/><line x1="1938.5" y1="787.0" x2="2025.0" y2="787.0" stroke="#18a018" stroke-width="2"/><text transform="translate(2009.0 783.6) scale(0.78 1)" font-size="14.0" fill="#2b2b2b" text-anchor="start" textLength="18.3" lengthAdjust="spacing">F<tspan dy="-1.68">_</tspan><tspan dy="1.68"></tspan></text><text transform="translate(1894.0 809.2) scale(0.78 1)" font-size="15.7" fill="#0d6a6a" text-anchor="end" textLength="249.7" lengthAdjust="spacing">IO<tspan dy="-1.88">_</tspan><tspan dy="1.88">L9P</tspan><tspan dy="-1.88">_</tspan><tspan dy="1.88">T1L</tspan><tspan dy="-1.88">_</tspan><tspan dy="1.88">N4</tspan><tspan dy="-1.88">_</tspan><tspan dy="1.88">AD12P</tspan><tspan dy="-1.88">_</tspan><tspan dy="1.88">65</tspan></text><text transform="translate(1912.0 801.2) scale(0.9 1)" font-size="15.6" fill="#b81c1c" text-anchor="start" textLength="19.4" lengthAdjust="spacing">K2</text><line x1="1904.4" y1="803.5" x2="1938.5" y2="803.5" stroke="#a02a2a" stroke-width="1"/><line x1="1938.5" y1="804.0" x2="2025.0" y2="804.0" stroke="#18a018" stroke-width="2"/><text transform="translate(2009.0 800.9) scale(0.78 1)" font-size="14.0" fill="#2b2b2b" text-anchor="start" textLength="18.3" lengthAdjust="spacing">F<tspan dy="-1.68">_</tspan><tspan dy="1.68"></tspan></text><text transform="translate(1894.0 826.5) scale(0.78 1)" font-size="15.7" fill="#0d6a6a" text-anchor="end" textLength="251.8" lengthAdjust="spacing">IO<tspan dy="-1.88">_</tspan><tspan dy="1.88">L9N</tspan><tspan dy="-1.88">_</tspan><tspan dy="1.88">T1L</tspan><tspan dy="-1.88">_</tspan><tspan dy="1.88">N5</tspan><tspan dy="-1.88">_</tspan><tspan dy="1.88">AD12N</tspan><tspan dy="-1.88">_</tspan><tspan dy="1.88">65</tspan></text><text transform="translate(1912.0 818.5) scale(0.9 1)" font-size="15.6" fill="#b81c1c" text-anchor="start" textLength="16.8" lengthAdjust="spacing">J2</text><line x1="1904.4" y1="821.5" x2="1938.5" y2="821.5" stroke="#a02a2a" stroke-width="1"/><line x1="1938.5" y1="821.0" x2="2025.0" y2="821.0" stroke="#18a018" stroke-width="2"/><text transform="translate(2009.0 818.2) scale(0.78 1)" font-size="14.0" fill="#2b2b2b" text-anchor="start" textLength="18.3" lengthAdjust="spacing">F<tspan dy="-1.68">_</tspan><tspan dy="1.68"></tspan></text><text transform="translate(1894.0 843.8) scale(0.78 1)" font-size="15.7" fill="#0d6a6a" text-anchor="end" textLength="305.6" lengthAdjust="spacing">IO<tspan dy="-1.88">_</tspan><tspan dy="1.88">L10P</tspan><tspan dy="-1.88">_</tspan><tspan dy="1.88">T1U</tspan><tspan dy="-1.88">_</tspan><tspan dy="1.88">N6</tspan><tspan dy="-1.88">_</tspan><tspan dy="1.88">QBC</tspan><tspan dy="-1.88">_</tspan><tspan dy="1.88">AD4P</tspan><tspan dy="-1.88">_</tspan><tspan dy="1.88">65</tspan></text><text transform="translate(1912.0 835.8) scale(0.9 1)" font-size="15.6" fill="#b81c1c" text-anchor="start" textLength="20.3" lengthAdjust="spacing">H4</text><line x1="1904.4" y1="838.5" x2="1938.5" y2="838.5" stroke="#a02a2a" stroke-width="1"/><line x1="1938.5" y1="838.0" x2="2025.0" y2="838.0" stroke="#18a018" stroke-width="2"/><text transform="translate(2009.0 835.5) scale(0.78 1)" font-size="14.0" fill="#2b2b2b" text-anchor="start" textLength="18.3" lengthAdjust="spacing">F<tspan dy="-1.68">_</tspan><tspan dy="1.68"></tspan></text><text transform="translate(1894.0 861.0) scale(0.78 1)" font-size="15.7" fill="#0d6a6a" text-anchor="end" textLength="307.7" lengthAdjust="spacing">IO<tspan dy="-1.88">_</tspan><tspan dy="1.88">L10N</tspan><tspan dy="-1.88">_</tspan><tspan dy="1.88">T1U</tspan><tspan dy="-1.88">_</tspan><tspan dy="1.88">N7</tspan><tspan dy="-1.88">_</tspan><tspan dy="1.88">QBC</tspan><tspan dy="-1.88">_</tspan><tspan dy="1.88">AD4N</tspan><tspan dy="-1.88">_</tspan><tspan dy="1.88">65</tspan></text><text transform="translate(1912.0 853.0) scale(0.9 1)" font-size="15.6" fill="#b81c1c" text-anchor="start" textLength="20.3" lengthAdjust="spacing">H3</text><line x1="1904.4" y1="855.5" x2="1938.5" y2="855.5" stroke="#a02a2a" stroke-width="1"/><line x1="1938.5" y1="856.0" x2="2025.0" y2="856.0" stroke="#18a018" stroke-width="2"/><text transform="translate(2009.0 852.7) scale(0.78 1)" font-size="14.0" fill="#2b2b2b" text-anchor="start" textLength="18.3" lengthAdjust="spacing">F<tspan dy="-1.68">_</tspan><tspan dy="1.68"></tspan></text><text transform="translate(1894.0 878.3) scale(0.78 1)" font-size="15.7" fill="#0d6a6a" text-anchor="end" textLength="229.9" lengthAdjust="spacing">IO<tspan dy="-1.88">_</tspan><tspan dy="1.88">L11P</tspan><tspan dy="-1.88">_</tspan><tspan dy="1.88">T1U</tspan><tspan dy="-1.88">_</tspan><tspan dy="1.88">N8</tspan><tspan dy="-1.88">_</tspan><tspan dy="1.88">GC</tspan><tspan dy="-1.88">_</tspan><tspan dy="1.88">65</tspan></text><text transform="translate(1912.0 870.3) scale(0.9 1)" font-size="15.6" fill="#b81c1c" text-anchor="start" textLength="19.4" lengthAdjust="spacing">K4</text><line x1="1904.4" y1="872.5" x2="1938.5" y2="872.5" stroke="#a02a2a" stroke-width="1"/><line x1="1938.5" y1="873.0" x2="2025.0" y2="873.0" stroke="#18a018" stroke-width="2"/><text transform="translate(2009.0 870.0) scale(0.78 1)" font-size="14.0" fill="#2b2b2b" text-anchor="start" textLength="21.7" lengthAdjust="spacing">US</text><text transform="translate(1894.0 895.6) scale(0.78 1)" font-size="15.7" fill="#0d6a6a" text-anchor="end" textLength="231.0" lengthAdjust="spacing">IO<tspan dy="-1.88">_</tspan><tspan dy="1.88">L11N</tspan><tspan dy="-1.88">_</tspan><tspan dy="1.88">T1U</tspan><tspan dy="-1.88">_</tspan><tspan dy="1.88">N9</tspan><tspan dy="-1.88">_</tspan><tspan dy="1.88">GC</tspan><tspan dy="-1.88">_</tspan><tspan dy="1.88">65</tspan></text><text transform="translate(1912.0 887.6) scale(0.9 1)" font-size="15.6" fill="#b81c1c" text-anchor="start" textLength="19.4" lengthAdjust="spacing">K3</text><line x1="1904.4" y1="890.5" x2="1938.5" y2="890.5" stroke="#a02a2a" stroke-width="1"/><line x1="1938.5" y1="890.0" x2="2025.0" y2="890.0" stroke="#18a018" stroke-width="2"/><text transform="translate(2009.0 887.3) scale(0.78 1)" font-size="14.0" fill="#2b2b2b" text-anchor="start" textLength="21.7" lengthAdjust="spacing">US</text><text transform="translate(1894.0 912.8) scale(0.78 1)" font-size="15.7" fill="#0d6a6a" text-anchor="end" textLength="242.1" lengthAdjust="spacing">IO<tspan dy="-1.88">_</tspan><tspan dy="1.88">L12P</tspan><tspan dy="-1.88">_</tspan><tspan dy="1.88">T1U</tspan><tspan dy="-1.88">_</tspan><tspan dy="1.88">N10</tspan><tspan dy="-1.88">_</tspan><tspan dy="1.88">GC</tspan><tspan dy="-1.88">_</tspan><tspan dy="1.88">65</tspan></text><text transform="translate(1912.0 904.8) scale(0.9 1)" font-size="15.6" fill="#b81c1c" text-anchor="start" textLength="17.7" lengthAdjust="spacing">L3</text><line x1="1904.4" y1="907.5" x2="1938.5" y2="907.5" stroke="#a02a2a" stroke-width="1"/><line x1="1938.5" y1="907.0" x2="2025.0" y2="907.0" stroke="#18a018" stroke-width="2"/><text transform="translate(2009.0 904.5) scale(0.78 1)" font-size="14.0" fill="#2b2b2b" text-anchor="start" textLength="21.7" lengthAdjust="spacing">US</text><text transform="translate(1894.0 930.1) scale(0.78 1)" font-size="15.7" fill="#0d6a6a" text-anchor="end" textLength="241.8" lengthAdjust="spacing">IO<tspan dy="-1.88">_</tspan><tspan dy="1.88">L12N</tspan><tspan dy="-1.88">_</tspan><tspan dy="1.88">T1U</tspan><tspan dy="-1.88">_</tspan><tspan dy="1.88">N11</tspan><tspan dy="-1.88">_</tspan><tspan dy="1.88">GC</tspan><tspan dy="-1.88">_</tspan><tspan dy="1.88">65</tspan></text><text transform="translate(1912.0 922.1) scale(0.9 1)" font-size="15.6" fill="#b81c1c" text-anchor="start" textLength="17.7" lengthAdjust="spacing">L2</text><line x1="1904.4" y1="924.5" x2="1938.5" y2="924.5" stroke="#a02a2a" stroke-width="1"/><line x1="1938.5" y1="925.0" x2="2025.0" y2="925.0" stroke="#18a018" stroke-width="2"/><text transform="translate(2009.0 921.8) scale(0.78 1)" font-size="14.0" fill="#2b2b2b" text-anchor="start" textLength="18.3" lengthAdjust="spacing">F<tspan dy="-1.68">_</tspan><tspan dy="1.68"></tspan></text><text transform="translate(1894.0 947.4) scale(0.78 1)" font-size="15.7" fill="#0d6a6a" text-anchor="end" textLength="280.9" lengthAdjust="spacing">IO<tspan dy="-1.88">_</tspan><tspan dy="1.88">L13P</tspan><tspan dy="-1.88">_</tspan><tspan dy="1.88">T2L</tspan><tspan dy="-1.88">_</tspan><tspan dy="1.88">N0</tspan><tspan dy="-1.88">_</tspan><tspan dy="1.88">GC</tspan><tspan dy="-1.88">_</tspan><tspan dy="1.88">QBC</tspan><tspan dy="-1.88">_</tspan><tspan dy="1.88">65</tspan></text><text transform="translate(1912.0 939.4) scale(0.9 1)" font-size="15.6" fill="#b81c1c" text-anchor="start" textLength="17.7" lengthAdjust="spacing">L7</text><line x1="1904.4" y1="941.5" x2="1938.5" y2="941.5" stroke="#a02a2a" stroke-width="1"/><line x1="1938.5" y1="942.0" x2="2025.0" y2="942.0" stroke="#18a018" stroke-width="2"/><text transform="translate(2009.0 939.1) scale(0.78 1)" font-size="14.0" fill="#2b2b2b" text-anchor="start" textLength="18.3" lengthAdjust="spacing">F<tspan dy="-1.68">_</tspan><tspan dy="1.68"></tspan></text><text transform="translate(1894.0 964.6) scale(0.78 1)" font-size="15.7" fill="#0d6a6a" text-anchor="end" textLength="281.9" lengthAdjust="spacing">IO<tspan dy="-1.88">_</tspan><tspan dy="1.88">L13N</tspan><tspan dy="-1.88">_</tspan><tspan dy="1.88">T2L</tspan><tspan dy="-1.88">_</tspan><tspan dy="1.88">N1</tspan><tspan dy="-1.88">_</tspan><tspan dy="1.88">GC</tspan><tspan dy="-1.88">_</tspan><tspan dy="1.88">QBC</tspan><tspan dy="-1.88">_</tspan><tspan dy="1.88">65</tspan></text><text transform="translate(1912.0 956.6) scale(0.9 1)" font-size="15.6" fill="#b81c1c" text-anchor="start" textLength="17.7" lengthAdjust="spacing">L6</text><line x1="1904.4" y1="959.5" x2="1938.5" y2="959.5" stroke="#a02a2a" stroke-width="1"/><line x1="1938.5" y1="959.0" x2="2025.0" y2="959.0" stroke="#18a018" stroke-width="2"/><text transform="translate(2009.0 956.4) scale(0.78 1)" font-size="14.0" fill="#2b2b2b" text-anchor="start" textLength="21.7" lengthAdjust="spacing">US</text><text transform="translate(1894.0 981.9) scale(0.78 1)" font-size="15.7" fill="#0d6a6a" text-anchor="end" textLength="228.1" lengthAdjust="spacing">IO<tspan dy="-1.88">_</tspan><tspan dy="1.88">L14P</tspan><tspan dy="-1.88">_</tspan><tspan dy="1.88">T2L</tspan><tspan dy="-1.88">_</tspan><tspan dy="1.88">N2</tspan><tspan dy="-1.88">_</tspan><tspan dy="1.88">GC</tspan><tspan dy="-1.88">_</tspan><tspan dy="1.88">65</tspan></text><text transform="translate(1912.0 973.9) scale(0.9 1)" font-size="15.6" fill="#b81c1c" text-anchor="start" textLength="22.1" lengthAdjust="spacing">M6</text><line x1="1904.4" y1="976.5" x2="1938.5" y2="976.5" stroke="#a02a2a" stroke-width="1"/><line x1="1938.5" y1="977.0" x2="2025.0" y2="977.0" stroke="#18a018" stroke-width="2"/><text transform="translate(2009.0 973.6) scale(0.78 1)" font-size="14.0" fill="#2b2b2b" text-anchor="start" textLength="21.7" lengthAdjust="spacing">US</text><text transform="translate(1894.0 999.2) scale(0.78 1)" font-size="15.7" fill="#0d6a6a" text-anchor="end" textLength="229.2" lengthAdjust="spacing">IO<tspan dy="-1.88">_</tspan><tspan dy="1.88">L14N</tspan><tspan dy="-1.88">_</tspan><tspan dy="1.88">T2L</tspan><tspan dy="-1.88">_</tspan><tspan dy="1.88">N3</tspan><tspan dy="-1.88">_</tspan><tspan dy="1.88">GC</tspan><tspan dy="-1.88">_</tspan><tspan dy="1.88">65</tspan></text><text transform="translate(1912.0 991.2) scale(0.9 1)" font-size="15.6" fill="#b81c1c" text-anchor="start" textLength="17.7" lengthAdjust="spacing">L5</text><line x1="1904.4" y1="993.5" x2="1938.5" y2="993.5" stroke="#a02a2a" stroke-width="1"/><line x1="1938.5" y1="994.0" x2="2025.0" y2="994.0" stroke="#18a018" stroke-width="2"/><text transform="translate(2009.0 990.9) scale(0.78 1)" font-size="14.0" fill="#2b2b2b" text-anchor="start" textLength="21.7" lengthAdjust="spacing">US</text><text transform="translate(1894.0 1016.5) scale(0.78 1)" font-size="15.7" fill="#0d6a6a" text-anchor="end" textLength="259.0" lengthAdjust="spacing">IO<tspan dy="-1.88">_</tspan><tspan dy="1.88">L15P</tspan><tspan dy="-1.88">_</tspan><tspan dy="1.88">T2L</tspan><tspan dy="-1.88">_</tspan><tspan dy="1.88">N4</tspan><tspan dy="-1.88">_</tspan><tspan dy="1.88">AD11P</tspan><tspan dy="-1.88">_</tspan><tspan dy="1.88">65</tspan></text><text transform="translate(1912.0 1008.5) scale(0.9 1)" font-size="15.6" fill="#b81c1c" text-anchor="start" textLength="20.3" lengthAdjust="spacing">N7</text><line x1="1904.4" y1="1011.5" x2="1938.5" y2="1011.5" stroke="#a02a2a" stroke-width="1"/><line x1="1938.5" y1="1011.0" x2="2025.0" y2="1011.0" stroke="#18a018" stroke-width="2"/><text transform="translate(2009.0 1008.2) scale(0.78 1)" font-size="14.0" fill="#2b2b2b" text-anchor="start" textLength="18.3" lengthAdjust="spacing">F<tspan dy="-1.68">_</tspan><tspan dy="1.68"></tspan></text><text transform="translate(1894.0 1033.7) scale(0.78 1)" font-size="15.7" fill="#0d6a6a" text-anchor="end" textLength="261.1" lengthAdjust="spacing">IO<tspan dy="-1.88">_</tspan><tspan dy="1.88">L15N</tspan><tspan dy="-1.88">_</tspan><tspan dy="1.88">T2L</tspan><tspan dy="-1.88">_</tspan><tspan dy="1.88">N5</tspan><tspan dy="-1.88">_</tspan><tspan dy="1.88">AD11N</tspan><tspan dy="-1.88">_</tspan><tspan dy="1.88">65</tspan></text><text transform="translate(1912.0 1025.7) scale(0.9 1)" font-size="15.6" fill="#b81c1c" text-anchor="start" textLength="20.3" lengthAdjust="spacing">N6</text><line x1="1904.4" y1="1028.5" x2="1938.5" y2="1028.5" stroke="#a02a2a" stroke-width="1"/><line x1="1938.5" y1="1028.0" x2="2025.0" y2="1028.0" stroke="#18a018" stroke-width="2"/><text transform="translate(2009.0 1025.4) scale(0.78 1)" font-size="14.0" fill="#2b2b2b" text-anchor="start" textLength="21.7" lengthAdjust="spacing">US</text><text transform="translate(1894.0 1051.0) scale(0.78 1)" font-size="15.7" fill="#0d6a6a" text-anchor="end" textLength="305.6" lengthAdjust="spacing">IO<tspan dy="-1.88">_</tspan><tspan dy="1.88">L16P</tspan><tspan dy="-1.88">_</tspan><tspan dy="1.88">T2U</tspan><tspan dy="-1.88">_</tspan><tspan dy="1.88">N6</tspan><tspan dy="-1.88">_</tspan><tspan dy="1.88">QBC</tspan><tspan dy="-1.88">_</tspan><tspan dy="1.88">AD3P</tspan><tspan dy="-1.88">_</tspan><tspan dy="1.88">65</tspan></text><text transform="translate(1912.0 1043.0) scale(0.9 1)" font-size="15.6" fill="#b81c1c" text-anchor="start" textLength="19.4" lengthAdjust="spacing">P7</text><line x1="1904.4" y1="1045.5" x2="1938.5" y2="1045.5" stroke="#a02a2a" stroke-width="1"/><line x1="1938.5" y1="1046.0" x2="2025.0" y2="1046.0" stroke="#18a018" stroke-width="2"/><text transform="translate(2009.0 1042.7) scale(0.78 1)" font-size="14.0" fill="#2b2b2b" text-anchor="start" textLength="21.7" lengthAdjust="spacing">US</text><text transform="translate(1894.0 1068.3) scale(0.78 1)" font-size="15.7" fill="#0d6a6a" text-anchor="end" textLength="307.7" lengthAdjust="spacing">IO<tspan dy="-1.88">_</tspan><tspan dy="1.88">L16N</tspan><tspan dy="-1.88">_</tspan><tspan dy="1.88">T2U</tspan><tspan dy="-1.88">_</tspan><tspan dy="1.88">N7</tspan><tspan dy="-1.88">_</tspan><tspan dy="1.88">QBC</tspan><tspan dy="-1.88">_</tspan><tspan dy="1.88">AD3N</tspan><tspan dy="-1.88">_</tspan><tspan dy="1.88">65</tspan></text><text transform="translate(1912.0 1060.3) scale(0.9 1)" font-size="15.6" fill="#b81c1c" text-anchor="start" textLength="19.4" lengthAdjust="spacing">P6</text><line x1="1904.4" y1="1062.5" x2="1938.5" y2="1062.5" stroke="#a02a2a" stroke-width="1"/><line x1="1938.5" y1="1063.0" x2="2025.0" y2="1063.0" stroke="#18a018" stroke-width="2"/><text transform="translate(2009.0 1060.0) scale(0.78 1)" font-size="14.0" fill="#2b2b2b" text-anchor="start" textLength="21.7" lengthAdjust="spacing">US</text><line x1="2021.5" y1="121" x2="2021.5" y2="1057" stroke="#c8c8c8" stroke-width="1"/></svg>
<div class="a" style="left:415px;top:126px;width:30px;height:30px;border:1.2px solid #59b5eb;border-radius:2px;background:#c4e4f7"></div>
<div class="a" style="left:415px;top:158px;width:30px;height:31px;border:1.2px solid #59b5eb;border-radius:2px;background:#c4e4f7"></div>
<svg class="a" style="left:418.0px;top:129.5px" width="24" height="24" viewBox="0 0 24 24"><circle cx="3" cy="3" r="1.7" fill="#4d4d4d"/><circle cx="3" cy="9" r="1.7" fill="#4d4d4d"/><circle cx="3" cy="15" r="1.7" fill="#4d4d4d"/><circle cx="3" cy="21" r="1.7" fill="#4d4d4d"/><circle cx="9" cy="3" r="1.7" fill="#4d4d4d"/><circle cx="9" cy="9" r="1.7" fill="#4d4d4d"/><circle cx="9" cy="15" r="1.7" fill="#4d4d4d"/><circle cx="9" cy="21" r="1.7" fill="#4d4d4d"/><circle cx="15" cy="3" r="1.7" fill="#4d4d4d"/><circle cx="15" cy="9" r="1.7" fill="#4d4d4d"/><circle cx="15" cy="15" r="1.7" fill="#4d4d4d"/><circle cx="15" cy="21" r="1.7" fill="#4d4d4d"/><circle cx="21" cy="3" r="1.7" fill="#4d4d4d"/><circle cx="21" cy="9" r="1.7" fill="#4d4d4d"/><circle cx="21" cy="15" r="1.7" fill="#4d4d4d"/><circle cx="21" cy="21" r="1.7" fill="#4d4d4d"/></svg>
<svg class="a" style="left:418.0px;top:162.0px" width="24" height="24" viewBox="0 0 24 24"><circle cx="3" cy="3" r="1.5" fill="#4d4d4d"/><circle cx="3" cy="9" r="1.5" fill="#4d4d4d"/><circle cx="3" cy="15" r="1.5" fill="#4d4d4d"/><circle cx="9" cy="3" r="1.5" fill="#4d4d4d"/><circle cx="9" cy="9" r="1.5" fill="#4d4d4d"/><circle cx="15" cy="3" r="1.5" fill="#4d4d4d"/><circle cx="12.0" cy="12.0" r="1" fill="#4d4d4d"/><circle cx="12.0" cy="15.5" r="1" fill="#4d4d4d"/><circle cx="12.0" cy="19.0" r="1" fill="#4d4d4d"/><circle cx="12.0" cy="22.5" r="1" fill="#4d4d4d"/><circle cx="15.5" cy="12.0" r="1" fill="#4d4d4d"/><circle cx="15.5" cy="15.5" r="1" fill="#4d4d4d"/><circle cx="15.5" cy="19.0" r="1" fill="#4d4d4d"/><circle cx="15.5" cy="22.5" r="1" fill="#4d4d4d"/><circle cx="19.0" cy="12.0" r="1" fill="#4d4d4d"/><circle cx="19.0" cy="15.5" r="1" fill="#4d4d4d"/><circle cx="19.0" cy="19.0" r="1" fill="#4d4d4d"/><circle cx="19.0" cy="22.5" r="1" fill="#4d4d4d"/><circle cx="22.5" cy="12.0" r="1" fill="#4d4d4d"/><circle cx="22.5" cy="15.5" r="1" fill="#4d4d4d"/><circle cx="22.5" cy="19.0" r="1" fill="#4d4d4d"/><circle cx="22.5" cy="22.5" r="1" fill="#4d4d4d"/><path d="M2 22 L22 2" stroke="#4d4d4d" stroke-width="1.4"/></svg>
<svg class="a" style="left:418.0px;top:195.0px" width="24" height="24" viewBox="0 0 24 24"><text x="12" y="9.5" font-size="10.5" fill="#4d4d4d" text-anchor="middle" font-family="Liberation Sans" font-weight="bold">mil</text><path d="M3 14 H21 M6 11.5 L3 14 L6 16.5 M18 11.5 L21 14 L18 16.5" stroke="#4d4d4d" stroke-width="1.4" fill="none"/><path d="M24 17 V24 H17 Z" fill="#222"/></svg>
<svg class="a" style="left:418.0px;top:229.7px" width="24" height="24" viewBox="0 0 24 24"><path d="M7 2 V12 M2 7 H12" stroke="#1b80c8" stroke-width="2.6"/><path d="M8 8 L17 16 L13 16.5 L15.5 21 L13.5 22 L11 17.5 L8 20 Z" fill="#4d4d4d"/><path d="M24 17 V24 H17 Z" fill="#222"/></svg>
<div class="a" style="left:417px;top:257.0px;width:26px;height:1.2px;background:#cfcfcf"></div>
<svg class="a" style="left:418.0px;top:265.6px" width="24" height="24" viewBox="0 0 24 24"><path d="M4 3 V21 L21 12 Z" fill="none" stroke="#4d4d4d" stroke-width="1.5"/><path d="M0 8 H4 M0 16 H4 M21 12 H24 M6 9 H9 M6 15 H10 M8 13 V17" stroke="#4d4d4d" stroke-width="1.3"/><path d="M14 3 V21" stroke="#d0223f" stroke-width="1.6"/></svg>
<div class="a" style="left:417px;top:298.1px;width:26px;height:1.2px;background:#cfcfcf"></div>
<svg class="a" style="left:418.0px;top:307.3px" width="24" height="24" viewBox="0 0 24 24"><path d="M5 1 V19 H22 M5 13 H12 V19 M2 19 H5" stroke="#4d4d4d" stroke-width="1.5" fill="none"/><path d="M24 17 V24 H17 Z" fill="#222"/></svg>
<div class="a" style="left:417px;top:339.5px;width:26px;height:1.2px;background:#cfcfcf"></div>
<div class="a" style="left:415px;top:345px;width:30px;height:30px;border:1.2px solid #59b5eb;border-radius:2px;background:#c4e4f7"></div>
<svg class="a" style="left:418.0px;top:348.0px" width="24" height="24" viewBox="0 0 24 24"><rect x="1" y="2" width="22" height="8.5" fill="#4d4d4d"/><text x="12" y="9.5" font-size="8.5" font-weight="bold" fill="#fff" text-anchor="middle" font-family="Liberation Sans">R??</text><path d="M9 10 H15 L12 14 Z" fill="#d0223f"/><rect x="1" y="13.5" width="22" height="9" fill="#1b80c8"/><text x="12" y="21.5" font-size="9" font-weight="bold" fill="#fff" text-anchor="middle" font-family="Liberation Sans">R42</text></svg>
<div class="a" style="left:417px;top:380.5px;width:26px;height:1.2px;background:#cfcfcf"></div>
<div class="a" style="left:415px;top:386px;width:30px;height:30px;border:1.2px solid #59b5eb;border-radius:2px;background:#c4e4f7"></div>
<svg class="a" style="left:418.0px;top:389.0px" width="24" height="24" viewBox="0 0 24 24"><rect x="2" y="2" width="20" height="20" fill="#fff" stroke="#4d4d4d" stroke-width="1.5"/><rect x="2" y="2" width="20" height="3" fill="#4d4d4d"/><path d="M5 6 V15 H8 M5 9.5 H8" stroke="#1b80c8" stroke-width="1.6" fill="none"/><rect x="8" y="7.5" width="11" height="4.5" fill="#eee" stroke="#4d4d4d" stroke-width="1.2"/><rect x="8" y="13.5" width="11" height="4.5" fill="#eee" stroke="#4d4d4d" stroke-width="1.2"/></svg>
<div class="a" style="left:415px;top:418px;width:30px;height:30px;border:1.2px solid #59b5eb;border-radius:2px;background:#c4e4f7"></div>
<svg class="a" style="left:418.0px;top:421.0px" width="24" height="24" viewBox="0 0 24 24"><path d="M2 22 L15 9" stroke="#4d4d4d" stroke-width="1.4"/><path d="M14 10 L20 4" stroke="#4d4d4d" stroke-width="4.5" stroke-linecap="round"/><path d="M7.5 7.5 L20 20" stroke="#1b80c8" stroke-width="3.4" stroke-linecap="round"/><path d="M3 4 A5 5 0 0 0 10 9 L8 4 Z" fill="#1b80c8"/><circle cx="5.5" cy="5.5" r="4.2" fill="#1b80c8"/><path d="M3 1 L6.5 5" stroke="#c4e4f7" stroke-width="2.4"/></svg>
<svg class="a" style="left:2027.5px;top:129.4px" width="24" height="24" viewBox="0 0 24 24"><path d="M7 3.5 L17 12.5 L12.5 13 L14.8 17.8 L12.8 18.6 L10.6 13.8 L7 16.5 Z" fill="#4d4d4d"/><path d="M24 17 V24 H17 Z" fill="#222"/></svg>
<svg class="a" style="left:2027.5px;top:160.0px" width="24" height="24" viewBox="0 0 24 24"><path d="M0.5 5 H7.1 V17 H9.5" stroke="#4d4d4d" stroke-width="1.7" fill="none"/><path d="M18.2 1 V7 M18.2 11.5 V24.5 M14.5 17 H24" stroke="#4d4d4d" stroke-width="1.7"/><path d="M0.5 21.8 H12.5 V8.5 H24" stroke="#d0223f" stroke-width="1.8" fill="none"/></svg>
<div class="a" style="left:2026px;top:192.5px;width:27px;height:1.2px;background:#cfcfcf"></div>
<svg class="a" style="left:2027.5px;top:201.5px" width="24" height="24" viewBox="0 0 24 24"><path d="M4 3 V21 L21 12 Z" fill="none" stroke="#4d4d4d" stroke-width="1.5"/><path d="M0 12 H4 M21 12 H24 M6 9 H9 M6 16 H10 M8 14 V18" stroke="#4d4d4d" stroke-width="1.3"/></svg>
<svg class="a" style="left:2027.5px;top:234.8px" width="24" height="24" viewBox="0 0 24 24"><path d="M12 1 V12 M3 12 H21 M6 16 H18 M9 20 H15" stroke="#4d4d4d" stroke-width="1.6"/></svg>
<svg class="a" style="left:2027.5px;top:265.5px" width="24" height="24" viewBox="0 0 24 24"><path d="M2 22 L22 2" stroke="#1b80c8" stroke-width="1.8"/></svg>
<svg class="a" style="left:2027.5px;top:297.8px" width="24" height="24" viewBox="0 0 24 24"><path d="M3 21 L21 3" stroke="#1b80c8" stroke-width="3.2" stroke-linecap="round"/></svg>
<svg class="a" style="left:2027.5px;top:330.0px" width="24" height="24" viewBox="0 0 24 24"><path d="M2 4 H14 L21 11 M2 12 H12 L20 20 M21 4 V23" stroke="#4d4d4d" stroke-width="1.6" fill="none"/><path d="M14 4 L21 11 M12 12 L20 20" stroke="#1b80c8" stroke-width="1.6"/></svg>
<svg class="a" style="left:2027.5px;top:362.4px" width="24" height="24" viewBox="0 0 24 24"><path d="M2 12 H8 M8 6 L18 16 M8 16 L18 6" stroke="#1b80c8" stroke-width="1.7"/><path d="M2 12 H8" stroke="#4d4d4d" stroke-width="1.7"/></svg>
<svg class="a" style="left:2027.5px;top:394.7px" width="24" height="24" viewBox="0 0 24 24"><path d="M2 12 H22 M12 2 V22" stroke="#4d4d4d" stroke-width="1.6"/><circle cx="12" cy="12" r="4" fill="#1b80c8"/></svg>
<svg class="a" style="left:2027.5px;top:427.0px" width="24" height="24" viewBox="0 0 24 24"><text x="12" y="12" font-size="12" fill="#4d4d4d" text-anchor="middle" font-family="Liberation Sans">A</text><path d="M1 16 H21" stroke="#4d4d4d" stroke-width="1.6"/><path d="M24 17 V24 H17 Z" fill="#222"/></svg>
<svg class="a" style="left:2027.5px;top:459.3px" width="24" height="24" viewBox="0 0 24 24"><path d="M3 22 V12 H10 V3 H22 V22 Z" fill="#fff" stroke="#4d4d4d" stroke-width="1.6"/><path d="M3 18 L10 11 M3 22 L22 3 M8 22 L22 8 M13 22 L22 13 M18 22 L22 18 M10 7 L14 3 M10 3 L10 3" stroke="#4d4d4d" stroke-width="1.4"/></svg>
<svg class="a" style="left:2027.5px;top:491.0px" width="24" height="24" viewBox="0 0 24 24"><rect x="1" y="1" width="20" height="20" rx="3" fill="#d9cba8" stroke="#999" stroke-width="0.8"/><path d="M3 13 H8 M8 8 V18 M8 11 L13 8 M8 15 L13 18 M11 2 V8" stroke="#4d4d4d" stroke-width="1.3" fill="none"/><circle cx="17" cy="17" r="6.5" fill="#d0223f"/><path d="M17 13.5 V20.5 M13.5 17 H20.5" stroke="#fff" stroke-width="2"/></svg>
<svg class="a" style="left:2027.5px;top:522.7px" width="24" height="24" viewBox="0 0 24 24"><rect x="1" y="1" width="20" height="20" rx="3" fill="#d9cba8" stroke="#999" stroke-width="0.8"/><path d="M3 4 V14 L11 9 Z" fill="none" stroke="#1b80c8" stroke-width="1.3"/><circle cx="17" cy="17" r="6.5" fill="#d0223f"/><path d="M19.5 19 A3 3 0 1 1 18 13.7" stroke="#fff" stroke-width="1.8" fill="none"/><path d="M16 12 L18.5 13.8 L16.5 16" stroke="#fff" stroke-width="1.5" fill="none"/></svg>
<svg class="a" style="left:2027.5px;top:553.7px" width="24" height="24" viewBox="0 0 24 24"><rect x="1" y="3" width="14" height="19" rx="3" fill="#d9cba8"/><path d="M3 6 V16 L11 11 Z" fill="none" stroke="#1b80c8" stroke-width="1.3"/><path d="M13 8 L18 3 L23 8" stroke="#4d4d4d" stroke-width="1.4" fill="none"/><circle cx="17" cy="17" r="6.5" fill="#d0223f"/><path d="M14.5 18.5 L18.5 14.5 M15 15.5 A2 2 0 0 1 18 14 M19 18.5 A2 2 0 0 1 16 20" stroke="#fff" stroke-width="1.6" fill="none"/></svg>
<div class="a" style="left:2026px;top:586.0px;width:27px;height:1.2px;background:#cfcfcf"></div>
<svg class="a" style="left:2027.5px;top:593.8px" width="24" height="24" viewBox="0 0 24 24"><path d="M4 3 H20 M12 3 V22" stroke="#4d4d4d" stroke-width="3.6"/></svg>
<svg class="a" style="left:2027.5px;top:626.7px" width="24" height="24" viewBox="0 0 24 24"><rect x="2.5" y="3.5" width="19" height="17" fill="#eee" stroke="#4d4d4d" stroke-width="2"/><path d="M6 8 H18 M6 11.5 H18 M6 15 H14" stroke="#4d4d4d" stroke-width="1.3"/></svg>
<svg class="a" style="left:2027.5px;top:657.7px" width="24" height="24" viewBox="0 0 24 24"><rect x="1.5" y="3" width="21" height="19" fill="#fff" stroke="#6a6a6a" stroke-width="1.3"/><path d="M1.5 7.5 H22.5 M1.5 12 H22.5 M1.5 17 H22.5 M8.5 3 V22 M15.5 3 V22" stroke="#6a6a6a" stroke-width="1.2"/></svg>
<svg class="a" style="left:2027.5px;top:690.6px" width="24" height="24" viewBox="0 0 24 24"><rect x="2.5" y="4" width="19" height="16" fill="#c8c8c8" stroke="#4d4d4d" stroke-width="2"/></svg>
<svg class="a" style="left:2027.5px;top:721.6px" width="24" height="24" viewBox="0 0 24 24"><circle cx="12" cy="12" r="9.5" fill="#c8c8c8" stroke="#4d4d4d" stroke-width="2"/></svg>
<svg class="a" style="left:2027.5px;top:754.4px" width="24" height="24" viewBox="0 0 24 24"><path d="M3 22 V17 A14 14 0 0 1 21 3" fill="none" stroke="#4d4d4d" stroke-width="1.8"/></svg>
<svg class="a" style="left:2027.5px;top:787.3px" width="24" height="24" viewBox="0 0 24 24"><path d="M6 22 Q3 14 11 12 Q19 10 15 2" fill="none" stroke="#4d4d4d" stroke-width="1.6"/><path d="M1 11.5 H23" stroke="#1b80c8" stroke-width="1.5" stroke-dasharray="3 1.5"/><circle cx="11" cy="12" r="1.8" fill="#1b80c8"/><circle cx="2" cy="11.5" r="1.3" fill="#1b80c8"/><circle cx="22" cy="11.5" r="1.3" fill="#1b80c8"/></svg>
<svg class="a" style="left:2027.5px;top:818.3px" width="24" height="24" viewBox="0 0 24 24"><path d="M2 22 L22 2" stroke="#4d4d4d" stroke-width="1.6"/></svg>
<svg class="a" style="left:2027.5px;top:849.3px" width="24" height="24" viewBox="0 0 24 24"><rect x="2" y="2.5" width="20" height="19" rx="3" fill="#4d4d4d"/><path d="M4 19 L10 11 L14 15 L16 13 L20 19 Z" fill="#fff"/><circle cx="16" cy="8" r="2.3" fill="#fff"/></svg>
<svg class="a" style="left:2027.5px;top:882.2px" width="24" height="24" viewBox="0 0 24 24"><path d="M3 2 L14 11 L10 11.5 L12.5 16.5 L10.5 17.5 L8 12.5 L3 15.5 Z" fill="#4d4d4d"/><circle cx="17" cy="17" r="6" fill="#d0223f"/><path d="M14.5 14.5 L19.5 19.5 M19.5 14.5 L14.5 19.5" stroke="#fff" stroke-width="1.8"/></svg>
<div class="a" style="left:105px;top:1057px;width:1952px;height:39px;background:#fafafa"></div><div class="a" style="left:447px;top:1056.5px;width:1575px;height:1px;background:#c8c8c8"></div>
<div class="t" style="left:118px;top:1060px;font-size:13.4px;color:#3b3f43">Label</div>
<div class="t" style="left:118px;top:1079px;font-size:13.4px;color:#3b3f43">VMEF.D0</div>
<div class="t" style="left:203px;top:1060px;font-size:13.4px;color:#3b3f43">Font</div>
<div class="t" style="left:203px;top:1079px;font-size:13.4px;color:#3b3f43">Default</div>
<div class="t" style="left:279px;top:1060px;font-size:13.4px;color:#3b3f43">Style</div>
<div class="t" style="left:279px;top:1079px;font-size:13.4px;color:#3b3f43">Normal</div>
<div class="t" style="left:355px;top:1060px;font-size:13.4px;color:#3b3f43">Text Size</div>
<div class="t" style="left:355px;top:1079px;font-size:13.4px;color:#3b3f43">50 mils</div>
<div class="t" style="left:436px;top:1060px;font-size:13.4px;color:#3b3f43">Justification</div>
<div class="t" style="left:436px;top:1079px;font-size:13.4px;color:#3b3f43">Align left</div>
<div class="t" style="left:538px;top:1060px;font-size:13.4px;color:#3b3f43">Connection Name</div>
<div class="t" style="left:538px;top:1079px;font-size:13.4px;color:#3b3f43">/VMEF.D0</div>
<div class="t" style="left:678px;top:1060px;font-size:13.4px;color:#3b3f43">Resolved Netclass</div>
<div class="t" style="left:678px;top:1079px;font-size:13.4px;color:#3b3f43">Default</div>
<div class="a" style="left:105px;top:1096px;width:1952px;height:24px;background:#eeeff0"></div>
<div class="t" style="left:296px;top:1101px;font-size:13.4px;color:#3b3f43">Z 1.90</div>
<div class="t" style="left:481px;top:1101px;font-size:13.4px;color:#3b3f43">X 2050&nbsp; Y 2000</div>
<div class="t" style="left:666px;top:1101px;font-size:13.4px;color:#3b3f43">dx 2050&nbsp; dy 2000&nbsp; dist 2864</div>
<div class="t" style="left:851px;top:1101px;font-size:13.4px;color:#3b3f43">grid 50</div>
<div class="t" style="left:1036px;top:1101px;font-size:13.4px;color:#3b3f43">mils</div>
<svg class="a" style="left:2035px;top:1100px" width="20" height="20"><path d="M18 4 L4 18 M18 9 L9 18 M18 14 L14 18" stroke="#aaa" stroke-width="1"/></svg>
<div class="badge" style="left:34px;top:59px"></div><svg class="a" style="left:34px;top:59px" width="53" height="73"><path d="M13.5 54.2 H41.5 V59 H13.5 Z M24.8 12 H31 V59 H24.8 Z M24.8 12 L13.8 15.2 V20.2 L24.8 17.6 Z" fill="#fff"/></svg>
<div class="badge" style="left:313px;top:436px">2</div>
<div class="badge" style="left:342px;top:829px">3</div>
<div class="badge" style="left:342px;top:962px">4</div>
<div class="badge" style="left:33px;top:1048px">5</div>
<div class="badge" style="left:463px;top:220px">6</div>
<div class="badge" style="left:1962px;top:69px">7</div>
<div class="badge" style="left:1514px;top:371px">8</div>
</div></body></html>
